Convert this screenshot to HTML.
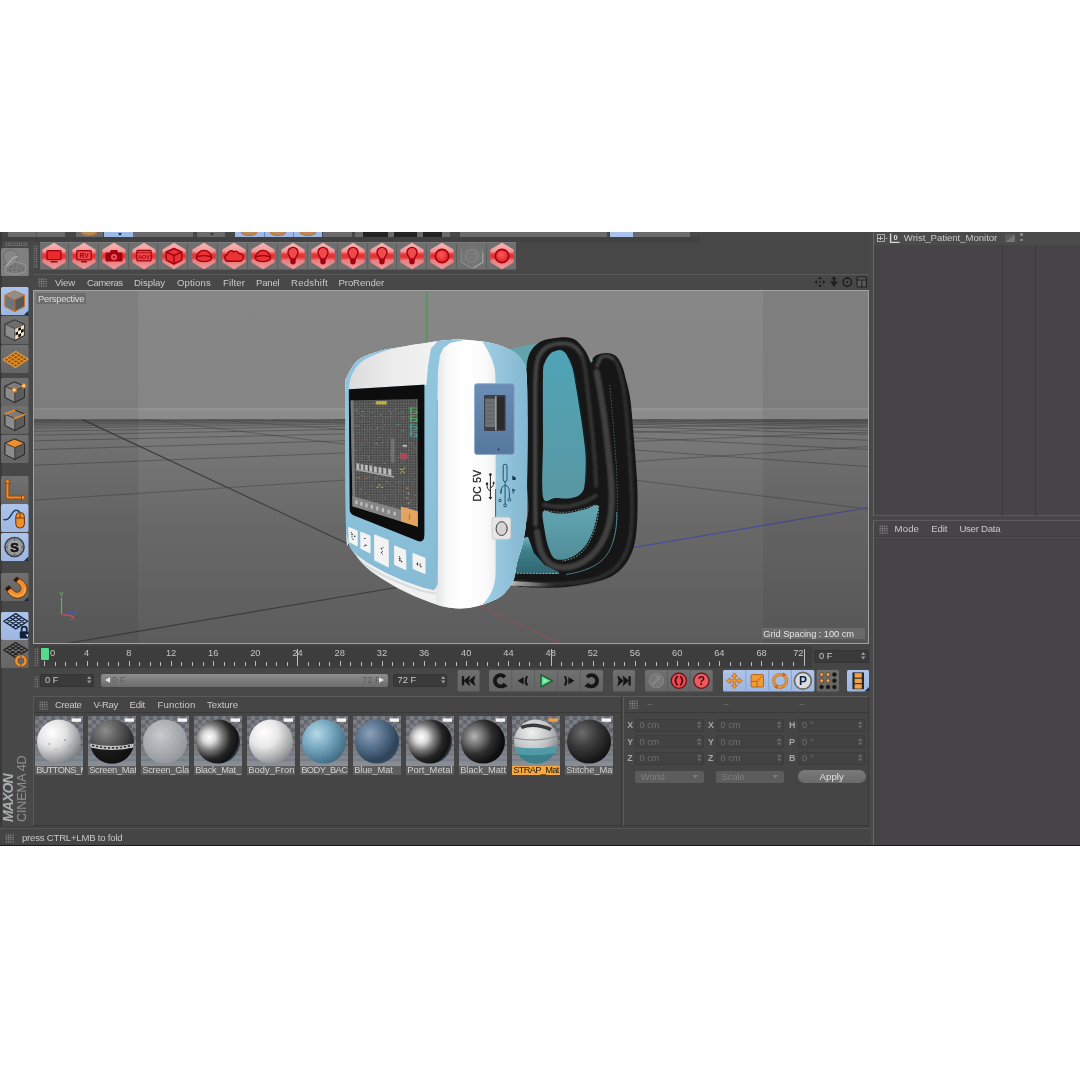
<!DOCTYPE html>
<html lang="en"><head><meta charset="utf-8"><title>Cinema 4D - Wrist_Patient_Monitor</title>
<style>
html,body{margin:0;padding:0;background:#fff;}
body{width:1080px;height:1080px;overflow:hidden;position:relative;font-family:"Liberation Sans",sans-serif;}
#app{position:absolute;left:0;top:232px;width:1080px;height:614px;background:#474747;overflow:hidden;}
#app div,#app span,#app svg{position:absolute;box-sizing:border-box;}
.t{white-space:nowrap;}
.ticks i{position:absolute;width:1px;background:#bdbdbd;display:block;}
#ui{left:0;top:-232px;width:1080px;height:1080px;will-change:transform;}

</style></head>
<body>
<div id="app">
<div id="ui">
<svg width="0" height="0" style="left:0;top:0"><defs>
<linearGradient id="hx" x1="0" y1="0" x2="0" y2="1"><stop offset="0" stop-color="#f8b6b6"/><stop offset=".3" stop-color="#f29a9a"/><stop offset=".5" stop-color="#ee7878"/><stop offset=".75" stop-color="#ea8484"/><stop offset="1" stop-color="#ef9c9c"/></linearGradient>
<linearGradient id="hb" x1="0" y1="0" x2="0" y2="1"><stop offset="0" stop-color="#e83838" stop-opacity="0"/><stop offset=".35" stop-color="#e62e2e" stop-opacity=".95"/><stop offset=".65" stop-color="#e62e2e" stop-opacity=".95"/><stop offset="1" stop-color="#e83838" stop-opacity="0"/></linearGradient>
<radialGradient id="rb" cx=".45" cy=".4" r=".6"><stop offset="0" stop-color="#ff5a5a"/><stop offset="1" stop-color="#e01e26"/></radialGradient>
<linearGradient id="btn" x1="0" y1="0" x2="0" y2="1"><stop offset="0" stop-color="#707070"/><stop offset="1" stop-color="#656565"/></linearGradient>
<linearGradient id="btnb" x1="0" y1="0" x2="0" y2="1"><stop offset="0" stop-color="#adc4ea"/><stop offset="1" stop-color="#9db7e2"/></linearGradient>
</defs></svg>
<!-- top cut-off palette row -->
<div style="left:7.5px;top:232.0px;width:57.5px;height:5.0px;background:#6b6b6b;"></div>
<div style="left:36.0px;top:232.0px;width:1.0px;height:5.0px;background:#555;"></div>
<div style="left:76.0px;top:232.0px;width:27.0px;height:5.0px;background:#6b6b6b;"></div>
<div style="left:103.5px;top:232.0px;width:29.5px;height:5.0px;background:#9db9e6;"></div>
<div style="left:133.0px;top:232.0px;width:59.5px;height:5.0px;background:#6b6b6b;"></div>
<div style="left:197.0px;top:232.0px;width:28.0px;height:5.0px;background:#6b6b6b;"></div>
<div style="left:234.7px;top:232.0px;width:87.8px;height:5.0px;background:#9db9e6;"></div>
<div style="left:264.0px;top:232.0px;width:1.0px;height:5.0px;background:#6f87ad;"></div>
<div style="left:293.0px;top:232.0px;width:1.0px;height:5.0px;background:#6f87ad;"></div>
<div style="left:81.0px;top:229.0px;width:16.0px;height:7.0px;border-radius:50%;border:1.5px solid #c46a2a;background:#b98a5a;"></div>
<div style="left:241.0px;top:229.0px;width:16.0px;height:7.0px;border-radius:50%;border:1.5px solid #c46a2a;background:#b98a5a;"></div>
<div style="left:270.0px;top:229.0px;width:16.0px;height:7.0px;border-radius:50%;border:1.5px solid #c46a2a;background:#b98a5a;"></div>
<div style="left:300.0px;top:229.0px;width:16.0px;height:7.0px;border-radius:50%;border:1.5px solid #c46a2a;background:#b98a5a;"></div>
<div style="left:322.5px;top:232.0px;width:29.2px;height:5.0px;background:#6b6b6b;"></div>
<div style="left:355.0px;top:232.0px;width:95.0px;height:5.0px;background:#6b6b6b;"></div>
<div style="left:362.5px;top:232.0px;width:25.5px;height:5.0px;background:#242424;"></div>
<div style="left:394.0px;top:232.0px;width:22.7px;height:5.0px;background:#242424;"></div>
<div style="left:423.0px;top:232.0px;width:18.7px;height:5.0px;background:#242424;"></div>
<div style="left:502.5px;top:232.0px;width:4.0px;height:3.0px;background:#e09a30;border-radius:50%;"></div>
<div style="left:460.0px;top:232.0px;width:146.7px;height:5.0px;background:#6b6b6b;"></div>
<div style="left:610.0px;top:232.0px;width:23.0px;height:5.0px;background:#a9c3ea;"></div>
<div style="left:633.0px;top:232.0px;width:57.0px;height:5.0px;background:#6b6b6b;"></div>
<div style="left:118.0px;top:233.0px;width:4.0px;height:3.0px;background:#2a3a5a;clip-path:polygon(0 0,100% 0,50% 100%);"></div>
<div style="left:210.0px;top:233.0px;width:4.0px;height:3.0px;background:#2a3a5a;clip-path:polygon(0 0,100% 0,50% 100%);"></div>
<div style="left:0.0px;top:237.0px;width:700.0px;height:4.5px;background:#414141;"></div>
<div style="left:0.0px;top:241.0px;width:32.5px;height:605.0px;background:#484848;"></div>
<div style="left:0.0px;top:232.0px;width:1.5px;height:614.0px;background:#3a3a3a;"></div>
<div style="left:5px;top:241.6px;width:22.5px;height:4.5px;background-image:radial-gradient(circle,#828282 0.6px,transparent 0.9px);background-size:2.25px 2.25px;"></div>
<div style="left:33px;top:245px;width:4.5px;height:22.5px;background-image:radial-gradient(circle,#7a7a7a 0.6px,transparent 0.9px);background-size:2.25px 2.25px;"></div>
<!-- redshift toolbar -->
<div style="left:40.0px;top:241.5px;width:476.0px;height:28.0px;background:#6f6f6f;border-top:1px solid #7b7b7b;border-bottom:1px solid #5c5c5c;"></div>
<div style="left:67.5px;top:242.5px;width:1.0px;height:26.0px;background:#5e5e5e;"></div>
<div style="left:97.5px;top:242.5px;width:1.0px;height:26.0px;background:#5e5e5e;"></div>
<div style="left:127.5px;top:242.5px;width:1.0px;height:26.0px;background:#5e5e5e;"></div>
<div style="left:157.0px;top:242.5px;width:1.0px;height:26.0px;background:#5e5e5e;"></div>
<div style="left:187.0px;top:242.5px;width:1.0px;height:26.0px;background:#5e5e5e;"></div>
<div style="left:217.0px;top:242.5px;width:1.0px;height:26.0px;background:#5e5e5e;"></div>
<div style="left:247.0px;top:242.5px;width:1.0px;height:26.0px;background:#5e5e5e;"></div>
<div style="left:276.5px;top:242.5px;width:1.0px;height:26.0px;background:#5e5e5e;"></div>
<div style="left:306.5px;top:242.5px;width:1.0px;height:26.0px;background:#5e5e5e;"></div>
<div style="left:336.5px;top:242.5px;width:1.0px;height:26.0px;background:#5e5e5e;"></div>
<div style="left:366.5px;top:242.5px;width:1.0px;height:26.0px;background:#5e5e5e;"></div>
<div style="left:396.0px;top:242.5px;width:1.0px;height:26.0px;background:#5e5e5e;"></div>
<div style="left:425.8px;top:242.5px;width:1.0px;height:26.0px;background:#5e5e5e;"></div>
<div style="left:455.8px;top:242.5px;width:1.0px;height:26.0px;background:#5e5e5e;"></div>
<div style="left:486.0px;top:242.5px;width:1.0px;height:26.0px;background:#5e5e5e;"></div>
<svg style="left:41.0px;top:241.5px;" width="26" height="28" viewBox="-13 -14 26 28" ><polygon points="0,-13.2 11.6,-6.6 11.6,6.6 0,13.2 -11.6,6.6 -11.6,-6.6" fill="url(#hx)"/><polygon points="-11.8,-4.6 11.8,-4.6 11.8,4.6 -11.8,4.6" fill="url(#hb)"/><rect x="-7" y="-5.3" width="14" height="9" rx="1" fill="#ea2a2e" stroke="#a30012" stroke-width="1.3"/><path d="M-3,5.8 L3,5.8" fill="none" stroke="#a30012" stroke-width="1.4" stroke-linejoin="round" stroke-linecap="round"/></svg>
<svg style="left:71.0px;top:241.5px;" width="26" height="28" viewBox="-13 -14 26 28" ><polygon points="0,-13.2 11.6,-6.6 11.6,6.6 0,13.2 -11.6,6.6 -11.6,-6.6" fill="url(#hx)"/><polygon points="-11.8,-4.6 11.8,-4.6 11.8,4.6 -11.8,4.6" fill="url(#hb)"/><rect x="-7.2" y="-5.3" width="14.4" height="9.2" rx="1" fill="#ee4848" stroke="#a30012" stroke-width="1.3"/><path d="M-2.5,5.8 L2.5,5.8" fill="none" stroke="#a30012" stroke-width="1.4" stroke-linejoin="round" stroke-linecap="round"/><text x="0" y="2.2" font-size="6.6" font-weight="bold" text-anchor="middle" fill="#a30012" font-family="Liberation Sans,sans-serif">RV</text></svg>
<svg style="left:101.0px;top:241.5px;" width="26" height="28" viewBox="-13 -14 26 28" ><polygon points="0,-13.2 11.6,-6.6 11.6,6.6 0,13.2 -11.6,6.6 -11.6,-6.6" fill="url(#hx)"/><polygon points="-11.8,-4.6 11.8,-4.6 11.8,4.6 -11.8,4.6" fill="url(#hb)"/><path d="M-7.5,-3.6 h3.2 l1.3,-2.4 h6 l1.3,2.4 h3.2 a1,1 0 0 1 1,1 v7.2 a1,1 0 0 1 -1,1 h-15 a1,1 0 0 1 -1,-1 v-7.2 a1,1 0 0 1 1,-1z" fill="#a30012"/><circle cx="0" cy="1" r="3" fill="#ee5a5a"/><circle cx="0" cy="1" r="1.3" fill="#b3101c"/></svg>
<svg style="left:130.8px;top:241.5px;" width="26" height="28" viewBox="-13 -14 26 28" ><polygon points="0,-13.2 11.6,-6.6 11.6,6.6 0,13.2 -11.6,6.6 -11.6,-6.6" fill="url(#hx)"/><polygon points="-11.8,-4.6 11.8,-4.6 11.8,4.6 -11.8,4.6" fill="url(#hb)"/><rect x="-7.2" y="-5.6" width="14.4" height="10.4" rx="1" fill="#ee4848" stroke="#a30012" stroke-width="1.2"/><path d="M-6.5,-3.4 L6.5,-3.4" stroke="#a30012" stroke-width="1.3" stroke-dasharray="1.2 .7"/><text x="0" y="3.1" font-size="5.4" font-weight="bold" text-anchor="middle" fill="#a30012" font-family="Liberation Sans,sans-serif">AOV</text></svg>
<svg style="left:160.5px;top:241.5px;" width="26" height="28" viewBox="-13 -14 26 28" ><polygon points="0,-13.2 11.6,-6.6 11.6,6.6 0,13.2 -11.6,6.6 -11.6,-6.6" fill="url(#hx)"/><polygon points="-11.8,-4.6 11.8,-4.6 11.8,4.6 -11.8,4.6" fill="url(#hb)"/><path d="M0,-7.5 L7.8,-4 L7.8,4.2 L0,8 L-7.8,4.2 L-7.8,-4 Z" fill="#ea3030"  stroke="#a30012" stroke-width="1.4" stroke-linejoin="round" stroke-linecap="round"/><path d="M-7.8,-4 L0,-0.5 L7.8,-4 M0,-0.5 L0,8" fill="none" stroke="#a30012" stroke-width="1.4" stroke-linejoin="round" stroke-linecap="round"/></svg>
<svg style="left:190.5px;top:241.5px;" width="26" height="28" viewBox="-13 -14 26 28" ><polygon points="0,-13.2 11.6,-6.6 11.6,6.6 0,13.2 -11.6,6.6 -11.6,-6.6" fill="url(#hx)"/><polygon points="-11.8,-4.6 11.8,-4.6 11.8,4.6 -11.8,4.6" fill="url(#hb)"/><path d="M-7.6,2.2 A7.6,7.8 0 0 1 7.6,2.2 A7.6,3.4 0 0 1 -7.6,2.2 Z" fill="#ea3434" stroke="#a30012" stroke-width="1.4"/><path d="M-7.6,2.2 A7.6,2.6 0 0 1 7.6,2.2" fill="none" stroke="#a30012" stroke-width="1.4" stroke-linejoin="round" stroke-linecap="round"/></svg>
<svg style="left:220.5px;top:241.5px;" width="26" height="28" viewBox="-13 -14 26 28" ><polygon points="0,-13.2 11.6,-6.6 11.6,6.6 0,13.2 -11.6,6.6 -11.6,-6.6" fill="url(#hx)"/><polygon points="-11.8,-4.6 11.8,-4.6 11.8,4.6 -11.8,4.6" fill="url(#hb)"/><path d="M-6,5.2 a3.4,3.4 0 0 1 -.6,-6.7 a3.8,3.8 0 0 1 6.4,-2.6 a3.1,3.1 0 0 1 5,1.6 a3.6,3.6 0 0 1 1.2,7.7 z" fill="#ea3434" stroke="#a30012" stroke-width="1.4" stroke-linejoin="round"/></svg>
<svg style="left:250.0px;top:241.5px;" width="26" height="28" viewBox="-13 -14 26 28" ><polygon points="0,-13.2 11.6,-6.6 11.6,6.6 0,13.2 -11.6,6.6 -11.6,-6.6" fill="url(#hx)"/><polygon points="-11.8,-4.6 11.8,-4.6 11.8,4.6 -11.8,4.6" fill="url(#hb)"/><path d="M-7.6,2.2 A7.6,7.8 0 0 1 7.6,2.2 A7.6,3.4 0 0 1 -7.6,2.2 Z" fill="#ea3434" stroke="#a30012" stroke-width="1.4"/><path d="M-7.6,2.2 A7.6,2.6 0 0 1 7.6,2.2" fill="none" stroke="#a30012" stroke-width="1.4" stroke-linejoin="round" stroke-linecap="round"/></svg>
<svg style="left:280.0px;top:241.5px;" width="26" height="28" viewBox="-13 -14 26 28" ><polygon points="0,-13.2 11.6,-6.6 11.6,6.6 0,13.2 -11.6,6.6 -11.6,-6.6" fill="url(#hx)"/><polygon points="-11.8,-4.6 11.8,-4.6 11.8,4.6 -11.8,4.6" fill="url(#hb)"/><path d="M-2.4,3 C-2.4,0.6 -5,-0.6 -5,-3.6 A5,5 0 0 1 5,-3.6 C5,-0.6 2.4,0.6 2.4,3 Z" fill="#ee4a4a" stroke="#a30012" stroke-width="1.4" stroke-linejoin="round"/><path d="M-2.7,3.2 h5.4 v2.6 a2.7,2.7 0 0 1 -5.4,0 z" fill="#a30012"/></svg>
<svg style="left:309.5px;top:241.5px;" width="26" height="28" viewBox="-13 -14 26 28" ><polygon points="0,-13.2 11.6,-6.6 11.6,6.6 0,13.2 -11.6,6.6 -11.6,-6.6" fill="url(#hx)"/><polygon points="-11.8,-4.6 11.8,-4.6 11.8,4.6 -11.8,4.6" fill="url(#hb)"/><path d="M-2.4,3 C-2.4,0.6 -5,-0.6 -5,-3.6 A5,5 0 0 1 5,-3.6 C5,-0.6 2.4,0.6 2.4,3 Z" fill="#ee4a4a" stroke="#a30012" stroke-width="1.4" stroke-linejoin="round"/><path d="M-2.7,3.2 h5.4 v2.6 a2.7,2.7 0 0 1 -5.4,0 z" fill="#a30012"/></svg>
<svg style="left:339.5px;top:241.5px;" width="26" height="28" viewBox="-13 -14 26 28" ><polygon points="0,-13.2 11.6,-6.6 11.6,6.6 0,13.2 -11.6,6.6 -11.6,-6.6" fill="url(#hx)"/><polygon points="-11.8,-4.6 11.8,-4.6 11.8,4.6 -11.8,4.6" fill="url(#hb)"/><path d="M-2.4,3 C-2.4,0.6 -5,-0.6 -5,-3.6 A5,5 0 0 1 5,-3.6 C5,-0.6 2.4,0.6 2.4,3 Z" fill="#ee4a4a" stroke="#a30012" stroke-width="1.4" stroke-linejoin="round"/><path d="M-2.7,3.2 h5.4 v2.6 a2.7,2.7 0 0 1 -5.4,0 z" fill="#a30012"/></svg>
<svg style="left:369.3px;top:241.5px;" width="26" height="28" viewBox="-13 -14 26 28" ><polygon points="0,-13.2 11.6,-6.6 11.6,6.6 0,13.2 -11.6,6.6 -11.6,-6.6" fill="url(#hx)"/><polygon points="-11.8,-4.6 11.8,-4.6 11.8,4.6 -11.8,4.6" fill="url(#hb)"/><path d="M-2.4,3 C-2.4,0.6 -5,-0.6 -5,-3.6 A5,5 0 0 1 5,-3.6 C5,-0.6 2.4,0.6 2.4,3 Z" fill="#ee4a4a" stroke="#a30012" stroke-width="1.4" stroke-linejoin="round"/><path d="M-2.7,3.2 h5.4 v2.6 a2.7,2.7 0 0 1 -5.4,0 z" fill="#a30012"/></svg>
<svg style="left:399.2px;top:241.5px;" width="26" height="28" viewBox="-13 -14 26 28" ><polygon points="0,-13.2 11.6,-6.6 11.6,6.6 0,13.2 -11.6,6.6 -11.6,-6.6" fill="url(#hx)"/><polygon points="-11.8,-4.6 11.8,-4.6 11.8,4.6 -11.8,4.6" fill="url(#hb)"/><path d="M-2.4,3 C-2.4,0.6 -5,-0.6 -5,-3.6 A5,5 0 0 1 5,-3.6 C5,-0.6 2.4,0.6 2.4,3 Z" fill="#ee4a4a" stroke="#a30012" stroke-width="1.4" stroke-linejoin="round"/><path d="M-2.7,3.2 h5.4 v2.6 a2.7,2.7 0 0 1 -5.4,0 z" fill="#a30012"/></svg>
<svg style="left:429.0px;top:241.5px;" width="26" height="28" viewBox="-13 -14 26 28" ><polygon points="0,-13.2 11.6,-6.6 11.6,6.6 0,13.2 -11.6,6.6 -11.6,-6.6" fill="url(#hx)"/><polygon points="-11.8,-4.6 11.8,-4.6 11.8,4.6 -11.8,4.6" fill="url(#hb)"/><circle r="6.7" fill="url(#rb)" stroke="#a30012" stroke-width="1.7"/></svg>
<svg style="left:459.0px;top:241.5px;" width="26" height="28" viewBox="-13 -14 26 28" ><polygon points="0,-13.2 11.6,-6.6 11.6,6.6 0,13.2 -11.6,6.6 -11.6,-6.6" fill="#747474" stroke="#8a8a8a" stroke-width="1.3" transform="scale(.93)"/><circle r="6.2" fill="none" stroke="#838383" stroke-width="1.6"/><circle r="2.8" cx=".6" cy=".3" fill="none" stroke="#7f7f7f" stroke-width="1.3"/><path d="M-10.5,-6 L0,-12.2 L10.5,-6" fill="none" stroke="#666" stroke-width="1"/><path d="M2,12 L10.8,6.5 L10.8,-2" fill="none" stroke="#a2a2a2" stroke-width="1.1"/></svg>
<svg style="left:488.5px;top:241.5px;" width="26" height="28" viewBox="-13 -14 26 28" ><polygon points="0,-13.2 11.6,-6.6 11.6,6.6 0,13.2 -11.6,6.6 -11.6,-6.6" fill="url(#hx)"/><polygon points="-11.8,-4.6 11.8,-4.6 11.8,4.6 -11.8,4.6" fill="url(#hb)"/><circle r="6.7" fill="url(#rb)" stroke="#a30012" stroke-width="1.7"/></svg>
<!-- left mode palette -->
<svg style="left:1.1px;top:247.9px;" width="27.8" height="28" viewBox="0 0 27.8 28" ><rect x="0" y="0" width="27.8" height="28" rx="1.5" fill="#808080"/><circle cx="9.5" cy="9" r="7.2" fill="#868686" stroke="#6c6c6c" stroke-width="1"/><path d="M3.5,18 C8,17 9.5,12.5 11.5,10.5 C13,9 15,8.6 17,8.8" fill="none" stroke="#a6a6a6" stroke-width="1.6"/><path d="M5,19.5 L14,13.5 L25,17 L24,24 L14,26.5 L4.5,24.5 Z" fill="#7a7a7a" stroke="#9a9a9a" stroke-width=".9"/><g fill="#666"><circle cx="10" cy="19" r="1.1"/><circle cx="14.5" cy="17.5" r="1.1"/><circle cx="19" cy="18.5" r="1.1"/><circle cx="9" cy="22.5" r="1.1"/><circle cx="13.5" cy="22" r="1.1"/><circle cx="18" cy="22.5" r="1.1"/><circle cx="22" cy="21" r="1.1"/><circle cx="3.6" cy="16.5" r="1.3"/></g></svg>
<svg style="left:1.2px;top:286.5px;" width="27.5" height="28" viewBox="0 0 27.5 28" ><rect x="0" y="0" width="27.5" height="28" rx="1.5" fill="url(#btnb)"/><path d="M13.5,4 L23.5,8.2 L23.5,19.5 L13.8,24.5 L4,19.5 L4,8.2 Z" fill="#575757" stroke="#c9762c" stroke-width="1.0" stroke-linejoin="round"/><path d="M4,8.2 L13.8,12.6 L13.8,24.5 L4,19.5 Z" fill="#6d767c"/><path d="M4,8.2 L13.5,4 L23.5,8.2 L13.8,12.6 Z" fill="#8f8f8f"/><path d="M4,8.2 L13.8,12.6 L23.5,8.2 M13.8,12.6 L13.8,24.5" fill="none" stroke="#c9762c" stroke-width="0.8"/><path d="M13.5,4 L23.5,8.2 L23.5,19.5 L13.8,24.5 L4,19.5 L4,8.2 Z" fill="none" stroke="#c9762c" stroke-width="1.0" stroke-linejoin="round"/><path d="M27.5,23.5 V28 H23 Z" fill="#1e2a3a"/></svg>
<svg style="left:1.2px;top:315.7px;" width="27.5" height="28" viewBox="0 0 27.5 28" ><rect x="0" y="0" width="27.5" height="28" rx="1.5" fill="url(#btn)"/><path d="M13.5,4 L23.5,8.2 L23.5,19.5 L13.8,24.5 L4,19.5 L4,8.2 Z" fill="#f6dcb8" stroke="#3a3a3a" stroke-width="1.0" stroke-linejoin="round"/><path d="M4,8.2 L13.8,12.6 L13.8,24.5 L4,19.5 Z" fill="#8c8c8c"/><path d="M4,8.2 L13.5,4 L23.5,8.2 L13.8,12.6 Z" fill="#6e6e6e"/><path d="M4,8.2 L13.8,12.6 L23.5,8.2 M13.8,12.6 L13.8,24.5" fill="none" stroke="#3a3a3a" stroke-width="0.8"/><path d="M13.5,4 L23.5,8.2 L23.5,19.5 L13.8,24.5 L4,19.5 L4,8.2 Z" fill="none" stroke="#3a3a3a" stroke-width="1.0" stroke-linejoin="round"/><path d="M14.6,13.4L17.3,12.2L17.3,15.3L14.6,16.6Z" fill="#f6dcb8"/><path d="M17.3,12.2L20.0,10.9L20.0,14.0L17.3,15.3Z" fill="#0c0c0c"/><path d="M20.0,10.9L22.7,9.7L22.7,12.8L20.0,14.0Z" fill="#f6dcb8"/><path d="M14.6,16.6L17.3,15.3L17.3,18.5L14.6,19.8Z" fill="#0c0c0c"/><path d="M17.3,15.3L20.0,14.0L20.0,17.2L17.3,18.5Z" fill="#ffffff"/><path d="M20.0,14.0L22.7,12.8L22.7,15.8L20.0,17.2Z" fill="#0c0c0c"/><path d="M14.6,19.8L17.3,18.5L17.3,21.6L14.6,23.0Z" fill="#f6dcb8"/><path d="M17.3,18.5L20.0,17.2L20.0,20.3L17.3,21.6Z" fill="#0c0c0c"/><path d="M20.0,17.2L22.7,15.8L22.7,18.9L20.0,20.3Z" fill="#f6dcb8"/></svg>
<svg style="left:1.2px;top:345.0px;" width="27.5" height="28" viewBox="0 0 27.5 28" ><rect x="0" y="0" width="27.5" height="28" rx="1.5" fill="url(#btn)"/><path d="M2.3,14.7 L14.9,6.4 L27,13.9 L14.5,22.6 Z" fill="#8a5414" stroke="#e8a040" stroke-width="1.2" stroke-linejoin="round"/><path d="M5.5,12.6 L17.6,20.4 M5.3,16.7 L17.9,8.3 M8.6,10.6 L20.8,18.2 M8.4,18.6 L20.9,10.2 M11.8,8.5 L23.9,16.1 M11.4,20.6 L24.0,12.0 " stroke="#e08a28" stroke-width="1.3" fill="none"/></svg>
<svg style="left:1.2px;top:378.0px;" width="27.5" height="28" viewBox="0 0 27.5 28" ><rect x="0" y="0" width="27.5" height="28" rx="1.5" fill="url(#btn)"/><path d="M13.5,4 L23.5,8.2 L23.5,19.5 L13.8,24.5 L4,19.5 L4,8.2 Z" fill="#5c5c5c" stroke="#2e2e2e" stroke-width="1.0" stroke-linejoin="round"/><path d="M4,8.2 L13.8,12.6 L13.8,24.5 L4,19.5 Z" fill="#8c8c8c"/><path d="M4,8.2 L13.5,4 L23.5,8.2 L13.8,12.6 Z" fill="#7c7c7c"/><path d="M4,8.2 L13.8,12.6 L23.5,8.2 M13.8,12.6 L13.8,24.5" fill="none" stroke="#2e2e2e" stroke-width="0.8"/><path d="M13.5,4 L23.5,8.2 L23.5,19.5 L13.8,24.5 L4,19.5 L4,8.2 Z" fill="none" stroke="#2e2e2e" stroke-width="1.0" stroke-linejoin="round"/><circle cx="22.8" cy="7.8" r="2" fill="#f8dcb8" stroke="#e07a1c" stroke-width="1.2"/><circle cx="13.3" cy="12" r="2" fill="#f8dcb8" stroke="#e07a1c" stroke-width="1.2"/></svg>
<svg style="left:1.2px;top:406.2px;" width="27.5" height="28" viewBox="0 0 27.5 28" ><rect x="0" y="0" width="27.5" height="28" rx="1.5" fill="url(#btn)"/><path d="M13.5,4 L23.5,8.2 L23.5,19.5 L13.8,24.5 L4,19.5 L4,8.2 Z" fill="#5c5c5c" stroke="#2e2e2e" stroke-width="1.0" stroke-linejoin="round"/><path d="M4,8.2 L13.8,12.6 L13.8,24.5 L4,19.5 Z" fill="#8c8c8c"/><path d="M4,8.2 L13.5,4 L23.5,8.2 L13.8,12.6 Z" fill="#7c7c7c"/><path d="M4,8.2 L13.8,12.6 L23.5,8.2 M13.8,12.6 L13.8,24.5" fill="none" stroke="#2e2e2e" stroke-width="0.8"/><path d="M13.5,4 L23.5,8.2 L23.5,19.5 L13.8,24.5 L4,19.5 L4,8.2 Z" fill="none" stroke="#2e2e2e" stroke-width="1.0" stroke-linejoin="round"/><path d="M4.2,8 L13.6,4.2 M13.8,12.6 L23.4,8.4" stroke="#f0902c" stroke-width="1.6" stroke-linecap="round"/></svg>
<svg style="left:1.2px;top:435.4px;" width="27.5" height="28" viewBox="0 0 27.5 28" ><rect x="0" y="0" width="27.5" height="28" rx="1.5" fill="url(#btn)"/><path d="M13.5,4 L23.5,8.2 L23.5,19.5 L13.8,24.5 L4,19.5 L4,8.2 Z" fill="#5c5c5c" stroke="#2e2e2e" stroke-width="1.0" stroke-linejoin="round"/><path d="M4,8.2 L13.8,12.6 L13.8,24.5 L4,19.5 Z" fill="#8c8c8c"/><path d="M4,8.2 L13.5,4 L23.5,8.2 L13.8,12.6 Z" fill="#f0902c"/><path d="M4,8.2 L13.8,12.6 L23.5,8.2 M13.8,12.6 L13.8,24.5" fill="none" stroke="#2e2e2e" stroke-width="0.8"/><path d="M13.5,4 L23.5,8.2 L23.5,19.5 L13.8,24.5 L4,19.5 L4,8.2 Z" fill="none" stroke="#2e2e2e" stroke-width="1.0" stroke-linejoin="round"/></svg>
<svg style="left:1.2px;top:476.0px;" width="27.5" height="28" viewBox="0 0 27.5 28" ><rect x="0" y="0" width="27.5" height="28" rx="1.5" fill="url(#btn)"/><path d="M6.5,5 V21.5 H22" fill="none" stroke="#7a3c08" stroke-width="3.6" stroke-linejoin="round"/><path d="M6.5,5 V21.5 H22" fill="none" stroke="#f0902c" stroke-width="2" stroke-linejoin="round"/><path d="M3.3,7 L6.5,2.5 L9.7,7 Z M20.5,18.2 L25,21.5 L20.5,24.8 Z" fill="#f0902c" stroke="#7a3c08" stroke-width=".8" stroke-linejoin="round"/></svg>
<svg style="left:1.2px;top:504.1px;" width="27.5" height="28" viewBox="0 0 27.5 28" ><rect x="0" y="0" width="27.5" height="28" rx="1.5" fill="url(#btnb)"/><path d="M3,15.5 C7,17 9,13 11,9.5 C13,6 16,5 18.5,8" fill="none" stroke="#1d3d6a" stroke-width="1.5" stroke-linecap="round"/><rect x="14.8" y="8.5" width="8.6" height="15.5" rx="4" fill="#f0902c" stroke="#6a3408" stroke-width="1"/><path d="M14.8,14 h8.6 M19.1,8.5 v5.5" stroke="#6a3408" stroke-width=".9"/></svg>
<svg style="left:1.2px;top:533.3px;" width="27.5" height="28" viewBox="0 0 27.5 28" ><rect x="0" y="0" width="27.5" height="28" rx="1.5" fill="url(#btnb)"/><circle cx="13.5" cy="14" r="9.6" fill="#8e9294" stroke="#3a3d40" stroke-width="1.4"/><circle cx="13.5" cy="14" r="6.6" fill="#a2a6a8"/><path d="M13.5,4.4 v3 M13.5,20.6 v3 M3.9,14 h3 M20.1,14 h3" stroke="#555" stroke-width="1"/><text x="13.5" y="18.6" font-size="13" font-weight="bold" text-anchor="middle" fill="#161616" stroke="#161616" stroke-width=".7" font-family="Liberation Sans,sans-serif">S</text><path d="M27.5,23.5 V28 H23 Z" fill="#1e2a3a"/></svg>
<svg style="left:1.2px;top:573.0px;" width="27.5" height="28" viewBox="0 0 27.5 28" ><rect x="0" y="0" width="27.5" height="28" rx="1.5" fill="url(#btn)"/><path d="M4.2,15.3 C6,19 8,21.5 10.2,23.1 C13,25 16,25.6 18.5,25 C21.5,24.2 24,22.6 25,20.3 C26.2,18 26.4,16 25.9,13.9 C25.2,11.2 23.6,9 21.3,7.4 C19.4,6 17.4,5 15.3,4.1 L12.5,7.4 C14.4,8.4 16.2,9.6 17.6,11.1 C19.2,12.6 20,14 19.9,15.7 C19.8,17.4 19,18.6 17.6,19 C16.4,19.4 15.2,19.2 13.9,18.5 C11.8,17.2 10,15.2 8.3,12.5 Z" fill="#f0902c" stroke="#6a3408" stroke-width="1" stroke-linejoin="round"/><path d="M4.2,15.3 L8.3,12.5 L10.2,15.2 L6,18.2 Z M15.3,4.1 L12.5,7.4 L15.4,9 L18.4,5.7 Z" fill="#2a1a10"/><path d="M9,19.5 C12,23 16.5,24 20,22.5 C23,21 24.6,18 24,14.6" fill="none" stroke="#f8c080" stroke-width="1" stroke-opacity=".8"/><path d="M27.5,23.5 V28 H23 Z" fill="#1e2a3a"/></svg>
<svg style="left:1.2px;top:611.5px;" width="27.5" height="28" viewBox="0 0 27.5 28" ><rect x="0" y="0" width="27.5" height="28" rx="1.5" fill="url(#btnb)"/><path d="M2.8,9.3 L14.8,1.6 L26.7,9.3 L14.8,17 Z" fill="none" stroke="#17253e" stroke-width="1.3" stroke-linejoin="round"/><path d="M5.8,7.4 L17.8,15.1 M5.8,11.2 L17.8,3.5 M8.8,5.5 L20.8,13.2 M8.8,13.2 L20.8,5.5 M11.8,3.5 L23.7,11.2 M11.8,15.1 L23.7,7.4 " stroke="#17253e" stroke-width="1.2" fill="none"/><rect x="18.8" y="19.2" width="8.8" height="7.4" rx="1" fill="#12203a"/><path d="M20.6,19.4 v-2.2 a2.6,2.6 0 0 1 5.2,0 v2.2" fill="none" stroke="#12203a" stroke-width="1.7"/><path d="M24.4,22.6 l2.6,0 l0,2.6z" fill="#e8eef8"/></svg>
<svg style="left:1.2px;top:640.2px;" width="27.5" height="28" viewBox="0 0 27.5 28" ><rect x="0" y="0" width="27.5" height="28" rx="1.5" fill="url(#btn)"/><path d="M2.8,10 L14.8,2.6 L26.7,10 L14.8,17.6 Z" fill="none" stroke="#242424" stroke-width="1.3" stroke-linejoin="round"/><path d="M5.8,8.2 L17.8,15.7 M5.8,11.9 L17.8,4.5 M8.8,6.3 L20.8,13.8 M8.8,13.8 L20.8,6.3 M11.8,4.4 L23.7,11.9 M11.8,15.7 L23.7,8.2 " stroke="#242424" stroke-width="1.2" fill="none"/><circle cx="19.9" cy="20.8" r="4.6" fill="none" stroke="#8a4a10" stroke-width="4"/><circle cx="19.9" cy="20.8" r="4.6" fill="none" stroke="#f0902c" stroke-width="2.6"/><path d="M19.9,14.6 v3 M19.9,24 v3" stroke="#6a6a6a" stroke-width="1.6"/></svg>
<!-- viewport menu -->
<div style="left:33.0px;top:273.5px;width:836.0px;height:16.5px;background:#484848;border-top:1px solid #5a5a5a;"></div>
<div style="left:38px;top:278px;width:9.2px;height:9.2px;background-image:radial-gradient(circle,#8c8c8c 0.6px,transparent 0.9px);background-size:2.3px 2.3px;"></div>
<span class="t " style="left:55.0px;top:275.8px;height:14px;line-height:14px;font-size:9.6px;color:#c9c9c9;letter-spacing:-0.159px;">View</span>
<span class="t " style="left:87.0px;top:275.8px;height:14px;line-height:14px;font-size:9.6px;color:#c9c9c9;letter-spacing:-0.477px;">Cameras</span>
<span class="t " style="left:134.0px;top:275.8px;height:14px;line-height:14px;font-size:9.6px;color:#c9c9c9;letter-spacing:-0.068px;">Display</span>
<span class="t " style="left:177.0px;top:275.8px;height:14px;line-height:14px;font-size:9.6px;color:#c9c9c9;letter-spacing:0.131px;">Options</span>
<span class="t " style="left:223.0px;top:275.8px;height:14px;line-height:14px;font-size:9.6px;color:#c9c9c9;letter-spacing:0.111px;">Filter</span>
<span class="t " style="left:256.0px;top:275.8px;height:14px;line-height:14px;font-size:9.6px;color:#c9c9c9;letter-spacing:-0.210px;">Panel</span>
<span class="t " style="left:291.0px;top:275.8px;height:14px;line-height:14px;font-size:9.6px;color:#c9c9c9;letter-spacing:0.223px;">Redshift</span>
<span class="t " style="left:338.5px;top:275.8px;height:14px;line-height:14px;font-size:9.6px;color:#c9c9c9;letter-spacing:-0.102px;">ProRender</span>
<svg style="left:813.0px;top:276.0px;" width="56" height="12" viewBox="0 0 56 12" ><path d="M7,0.5 l2,2.6 h-4z M7,11.5 l2,-2.6 h-4z M1.5,6 l2.6,-2 v4z M12.5,6 l-2.6,-2 v4z" fill="#1f1f1f"/><circle cx="7" cy="6" r="0.9" fill="#1f1f1f"/><path d="M21,0.5 v7" stroke="#1f1f1f" stroke-width="1.8"/><path d="M17,5.6 h8 l-4,5.4z" fill="#1f1f1f"/><path d="M18.6,2.6 h4.8" stroke="#1f1f1f" stroke-width="1.3"/><circle cx="34.3" cy="6.2" r="4.2" fill="none" stroke="#1f1f1f" stroke-width="1.5"/><circle cx="34.3" cy="6.2" r="1" fill="#1f1f1f"/><path d="M33,0.6 l3,1.2 l-2.6,1.7z" fill="#1f1f1f"/><rect x="44" y="1" width="9.4" height="10" rx=".8" fill="#5a5a5a" stroke="#1f1f1f" stroke-width="1.1"/><path d="M44,4 h9.4 M48.8,4 v7" stroke="#1f1f1f" stroke-width="1"/></svg>
<!-- 3D viewport -->
<svg style="left:33px;top:290px" width="836" height="354" viewBox="33 290 836 354"><defs>
<linearGradient id="sky" x1="0" y1="0" x2="0" y2="1"><stop offset="0" stop-color="#878787"/><stop offset="1" stop-color="#858585"/></linearGradient>
<linearGradient id="flr" x1="0" y1="0" x2="0" y2="1"><stop offset="0" stop-color="#7c7c7c"/><stop offset=".12" stop-color="#777777"/><stop offset=".45" stop-color="#6a696a"/><stop offset="1" stop-color="#5d5c5d"/></linearGradient>
<linearGradient id="far" x1="0" y1="0" x2="0" y2="1"><stop offset="0" stop-color="#4c4c4c" stop-opacity=".75"/><stop offset=".35" stop-color="#555" stop-opacity=".45"/><stop offset="1" stop-color="#666" stop-opacity="0"/></linearGradient>
</defs><rect x="33" y="290" width="836" height="119.0" fill="url(#sky)"/><rect x="33" y="409.0" width="836" height="11" fill="#8b8b8b"/><rect x="33" y="408.4" width="836" height="1.2" fill="#9a9a9a"/><rect x="33" y="419.6" width="836" height="224.39999999999998" fill="url(#flr)"/><g stroke="#3c3c3c" stroke-width="1" stroke-opacity=".48" fill="none"><line x1="33.0" y1="500.2" x2="869.0" y2="446.4"/><line x1="33.0" y1="465.3" x2="869.0" y2="432.1"/><line x1="33.0" y1="449.7" x2="869.0" y2="425.7"/><line x1="33.0" y1="440.9" x2="869.0" y2="422.1"/><line x1="33.0" y1="435.2" x2="869.0" y2="419.7"/><line x1="33.0" y1="431.2" x2="774.2" y2="419.6"/><line x1="33.0" y1="428.3" x2="672.0" y2="419.6"/><line x1="33.0" y1="426.1" x2="569.8" y2="419.6"/><line x1="33.0" y1="424.3" x2="467.6" y2="419.6"/><line x1="33.0" y1="422.8" x2="365.4" y2="419.6"/><line x1="33.0" y1="421.7" x2="263.2" y2="419.6"/><line x1="33.0" y1="420.7" x2="161.0" y2="419.6"/><line x1="33.0" y1="419.8" x2="58.8" y2="419.6"/><line x1="869.0" y1="509.2" x2="145.6" y2="419.6"/><line x1="869.0" y1="466.7" x2="208.5" y2="419.6"/><line x1="869.0" y1="449.6" x2="271.4" y2="419.6"/><line x1="869.0" y1="440.3" x2="334.4" y2="419.6"/><line x1="869.0" y1="434.4" x2="397.3" y2="419.6"/><line x1="869.0" y1="430.4" x2="460.2" y2="419.6"/><line x1="869.0" y1="427.5" x2="523.2" y2="419.6"/><line x1="869.0" y1="425.3" x2="586.1" y2="419.6"/><line x1="869.0" y1="423.6" x2="649.1" y2="419.6"/><line x1="869.0" y1="422.2" x2="712.0" y2="419.6"/><line x1="869.0" y1="421.0" x2="774.9" y2="419.6"/><line x1="869.0" y1="420.0" x2="837.9" y2="419.6"/></g><rect x="33" y="419.2" width="836" height="9" fill="url(#far)"/><line x1="429.1" y1="582.0" x2="82.6" y2="419.6" stroke="#383838" stroke-width="1.2" stroke-opacity="0.9"/><line x1="429.1" y1="582.0" x2="561.4" y2="644.0" stroke="#b04a58" stroke-width="1.0" stroke-opacity="0.6"/><line x1="429.1" y1="582.0" x2="869.0" y2="507.5" stroke="#4a4a9c" stroke-width="1.2" stroke-opacity="0.95"/><line x1="429.1" y1="582.0" x2="63.2" y2="644.0" stroke="#3a3a3a" stroke-width="1.2" stroke-opacity="0.9"/><line x1="426.8" y1="290" x2="426.8" y2="345" stroke="#3f9a4a" stroke-width="1.1"/><defs>
<filter id="hlblur" x="-10%" y="-10%" width="120%" height="120%"><feGaussianBlur stdDeviation="1.3"/></filter>
<filter id="soft" x="-5%" y="-5%" width="110%" height="110%"><feGaussianBlur stdDeviation=".42"/></filter>
<linearGradient id="teal1" x1="0" y1="0" x2="0" y2="1"><stop offset="0" stop-color="#4fa4b6"/><stop offset="1" stop-color="#5a97a3"/></linearGradient>
<linearGradient id="teal2" x1="0" y1="0" x2="0" y2="1"><stop offset="0" stop-color="#63a7b3"/><stop offset="1" stop-color="#4f8d98"/></linearGradient>
<pattern id="dith" width="2.6" height="2.6" patternUnits="userSpaceOnUse"><rect x="0" y="0" width="1.2" height="1.2" fill="#727272"/><rect x="1.3" y="1.3" width="1.1" height="1.1" fill="#3c3c3c"/></pattern>
<linearGradient id="teal3" x1="0" y1="0" x2="0" y2="1"><stop offset="0" stop-color="#72b6c0"/><stop offset=".35" stop-color="#3f808a"/><stop offset="1" stop-color="#2f6670"/></linearGradient>
<linearGradient id="bothl" x1="0" y1="0" x2="1" y2="0"><stop offset="0" stop-color="#d0d0d0" stop-opacity=".95"/><stop offset=".6" stop-color="#9a9a9a" stop-opacity=".6"/><stop offset="1" stop-color="#555" stop-opacity="0"/></linearGradient>
<linearGradient id="sidew" x1="0" y1="0" x2="1" y2="0"><stop offset="0" stop-color="#e3e5e6"/><stop offset=".2" stop-color="#fafafa"/><stop offset=".42" stop-color="#ffffff"/><stop offset=".8" stop-color="#fbfbfb"/><stop offset="1" stop-color="#e9ecee"/></linearGradient>
<linearGradient id="ftop" x1="0" y1="0" x2="1" y2="0"><stop offset="0" stop-color="#d8d8d8"/><stop offset=".5" stop-color="#ebebeb"/><stop offset="1" stop-color="#f3f3f3"/></linearGradient>
<linearGradient id="backb" x1="0" y1="0" x2="1" y2="0"><stop offset="0" stop-color="#a7d3e6"/><stop offset=".3" stop-color="#97c8df"/><stop offset="1" stop-color="#7db2cb"/></linearGradient>
<linearGradient id="frontb" x1="0" y1="0" x2="0" y2="1"><stop offset="0" stop-color="#93c6de"/><stop offset=".6" stop-color="#8cc1da"/><stop offset="1" stop-color="#86bbd5"/></linearGradient>
<linearGradient id="port" x1="0" y1="0" x2="0" y2="1"><stop offset="0" stop-color="#6a8db6"/><stop offset="1" stop-color="#55789c"/></linearGradient>
</defs><g filter="url(#soft)"><path d="M500.0,351.0L541.0,342.5L545.0,345.0L545.0,400.0L500.0,400.0Z" fill="#62a3ae"/><path d="M526.3,470.0C526.2,450.0 526.3,416.3 526.3,400.0C526.3,383.7 526.2,379.0 526.5,372.0C526.8,365.0 526.9,362.0 528.0,358.0C529.1,354.0 530.7,350.8 533.0,348.0C535.3,345.2 538.7,342.6 542.0,341.0C545.3,339.4 549.0,338.9 553.0,338.3C557.0,337.7 562.4,337.1 565.7,337.2C569.0,337.3 571.0,338.0 573.0,338.8C575.0,339.6 576.0,340.1 578.0,342.0C580.0,343.9 583.1,347.7 585.0,350.5C586.9,353.3 588.2,356.8 589.2,358.9C590.2,361.0 590.5,363.1 591.0,363.0C591.5,362.9 591.3,359.9 592.5,358.5C593.7,357.1 595.6,355.4 598.0,354.5C600.4,353.6 603.7,352.8 606.7,353.0C609.7,353.2 613.5,353.8 616.0,356.0C618.5,358.2 620.3,362.0 622.0,366.0C623.7,370.0 624.6,374.3 626.0,380.0C627.4,385.7 629.1,390.0 630.4,400.0C631.7,410.0 632.9,426.7 634.0,440.0C635.1,453.3 636.4,468.3 637.0,480.0C637.6,491.7 637.7,500.8 637.5,510.0C637.3,519.2 636.9,528.0 636.0,535.0C635.1,542.0 634.0,546.8 632.0,552.0C630.0,557.2 627.3,562.0 624.0,566.0C620.7,570.0 616.8,573.3 612.0,576.0C607.2,578.7 602.5,580.2 595.0,582.0C587.5,583.8 575.9,586.1 566.7,587.0C557.5,587.9 549.0,588.0 540.0,587.5C531.0,587.0 518.8,588.6 513.0,584.0C507.2,579.4 502.7,570.7 505.0,560.0C507.3,549.3 523.5,535.0 527.0,520.0C530.5,505.0 526.4,490.0 526.3,470.0Z" fill="#141414"/><path d="M590.4,357.5 L592.4,356.2 L592.6,361 L591.4,362.5Z" fill="#6aa9b3"/><path d="M515.0,540.0L528.0,536.7L534.0,553.0L544.4,564.8L559.0,572.0L559.0,574.0L515.0,573.0Z" fill="url(#teal3)"/><path d="M517,573.4 L559,573.4" stroke="#b9d6da" stroke-width=".8" stroke-dasharray="1.8 1.4" fill="none"/><path d="M543.0,497.0C541.2,488.3 543.0,458.3 543.0,440.0C543.0,421.7 542.7,386.7 543.0,375.0C543.3,363.3 543.8,365.3 545.0,362.0C546.2,358.7 548.8,354.8 551.0,353.0C553.2,351.2 557.6,350.0 559.7,349.9C561.8,349.8 563.7,351.3 565.0,352.5C566.3,353.7 567.3,355.4 568.5,358.0C569.7,360.6 571.8,364.9 573.0,369.7C574.2,374.5 575.3,382.6 576.6,390.2C577.9,397.8 580.1,411.0 581.4,420.3C582.7,429.6 584.8,444.5 585.4,452.0C586.0,459.5 585.7,465.6 585.6,470.0C585.5,474.4 585.3,478.0 585.0,481.0C584.7,484.0 584.5,487.8 583.5,490.0C582.5,492.2 580.3,494.7 578.0,496.0C575.7,497.3 571.5,498.2 568.0,498.5C564.5,498.8 558.8,498.2 555.0,498.0C551.2,497.8 544.8,505.7 543.0,497.0Z" fill="url(#teal1)"/><path d="M543.0,511.5C544.6,509.1 551.2,512.9 555.0,513.2C558.8,513.5 563.5,513.8 568.0,513.2C572.5,512.6 580.5,510.5 585.0,509.3C589.5,508.1 596.1,503.9 597.8,505.3C599.5,506.7 597.2,514.6 596.3,518.9C595.4,523.2 593.7,529.5 591.9,533.7C590.1,537.9 587.1,543.7 584.4,547.0C581.7,550.3 577.3,554.1 574.0,556.0C570.7,557.9 565.3,559.6 562.2,559.8C559.1,560.0 555.5,559.8 553.3,557.4C551.1,555.0 548.7,548.3 547.4,544.0C546.1,539.7 545.1,533.9 544.4,529.0C543.7,524.1 541.4,513.9 543.0,511.5Z" fill="url(#teal2)"/><g filter="url(#hlblur)"><path d="M535.5,525.0C535.5,515.8 535.2,490.8 535.2,470.0C535.2,449.2 535.1,416.3 535.2,400.0C535.3,383.7 535.2,379.2 535.8,372.0C536.3,364.8 536.9,361.0 538.5,357.0C540.1,353.0 542.6,350.2 545.5,348.0C548.4,345.8 552.5,344.7 556.0,344.0C559.5,343.3 563.3,343.1 566.5,343.6C569.7,344.1 572.6,345.3 575.0,347.0C577.4,348.7 580.0,352.8 581.0,354.0" fill="none" stroke="#4a4a4a" stroke-width="4.2" stroke-opacity="0.9" stroke-linecap="round"/><path d="M581.0,354.0C581.6,356.0 583.5,360.8 584.5,366.0C585.5,371.2 586.1,377.3 587.0,385.0C587.9,392.7 589.0,402.8 590.0,412.0C591.0,421.2 592.1,430.3 593.0,440.0C593.9,449.7 595.0,462.3 595.5,470.0C596.0,477.7 595.9,483.3 596.0,486.0" fill="none" stroke="#3a3a3a" stroke-width="4.5" stroke-opacity="0.8" stroke-linecap="round"/><path d="M597.0,366.0C597.7,364.6 599.3,359.2 601.0,357.5C602.7,355.8 605.0,355.8 607.0,356.0C609.0,356.2 612.0,358.5 613.0,359.0" fill="none" stroke="#4c4c4c" stroke-width="3.6" stroke-opacity="0.85" stroke-linecap="round"/><path d="M596.5,372.0C597.1,375.0 598.7,382.0 600.0,390.0C601.3,398.0 603.2,410.0 604.5,420.0C605.8,430.0 606.9,440.0 608.0,450.0C609.1,460.0 610.4,470.8 611.0,480.0C611.6,489.2 611.9,497.3 611.5,505.0C611.1,512.7 610.2,519.7 608.5,526.0C606.8,532.3 604.6,537.8 601.5,543.0C598.4,548.2 594.3,553.2 590.0,557.0C585.7,560.8 580.3,563.8 575.5,565.5C570.7,567.2 565.4,567.9 561.0,567.5C556.6,567.1 552.3,565.8 549.0,563.0C545.7,560.2 543.0,556.2 541.0,551.0C539.0,545.8 537.7,535.2 537.0,532.0" fill="none" stroke="#474747" stroke-width="6.2" stroke-opacity="0.9" stroke-linecap="round"/><path d="M544.0,504.8C546.0,505.1 551.8,506.3 556.0,506.5C560.2,506.7 564.3,506.9 569.0,506.2C573.7,505.5 579.5,504.0 584.0,502.2C588.5,500.4 594.0,496.6 596.0,495.5" fill="none" stroke="#3c3c3c" stroke-width="4.5" stroke-opacity="0.8" stroke-linecap="round"/><path d="M616.0,362.0C616.8,364.3 619.5,369.7 621.0,376.0C622.5,382.3 623.8,389.3 625.0,400.0C626.2,410.7 627.5,426.7 628.5,440.0C629.5,453.3 630.4,468.3 631.0,480.0C631.6,491.7 632.1,500.8 632.0,510.0C631.9,519.2 631.4,528.2 630.5,535.0C629.6,541.8 628.5,546.1 626.5,551.0C624.5,555.9 621.8,560.7 618.5,564.5C615.2,568.3 611.6,571.4 607.0,574.0C602.4,576.6 598.0,578.4 591.0,580.0C584.0,581.6 573.5,582.8 565.0,583.5C556.5,584.2 548.2,584.3 540.0,584.0C531.8,583.7 520.0,581.9 516.0,581.5" fill="none" stroke="#343434" stroke-width="4.2" stroke-opacity="0.85" stroke-linecap="round"/></g><path d="M506,580.2 C520,581.6 535,582.6 556,583.4 L556,587 C535,586.8 520,586.4 506,585Z" fill="url(#bothl)"/><path d="M566.0,353.5C566.7,354.6 568.7,357.1 570.0,360.0C571.3,362.9 572.7,365.8 574.0,371.0C575.3,376.2 576.2,382.7 577.6,391.0C579.0,399.3 580.9,410.8 582.4,421.0C583.9,431.2 585.7,443.8 586.4,452.0C587.1,460.2 586.7,465.2 586.6,470.0C586.5,474.8 586.1,479.2 586.0,481.0" fill="none" stroke="#16343a" stroke-width="1.2" stroke-dasharray="1.4 1.2"/><path d="M609.8,385.0C610.2,389.2 611.2,400.8 612.0,410.0C612.8,419.2 613.8,430.0 614.5,440.0C615.2,450.0 616.0,460.0 616.5,470.0C617.0,480.0 617.3,490.8 617.3,500.0C617.3,509.2 617.2,518.2 616.5,525.0C615.8,531.8 613.6,538.3 613.0,541.0" fill="none" stroke="#4a5c60" stroke-width="1.0" stroke-dasharray="1.6 1.5"/><path d="M598.8,506.0C598.6,508.2 598.4,514.3 597.4,519.0C596.4,523.7 595.0,529.2 593.0,534.0C591.0,538.8 588.5,544.1 585.5,548.0C582.5,551.9 578.9,555.0 575.0,557.2C571.1,559.4 564.3,560.5 562.2,561.2" fill="none" stroke="#a8ccd2" stroke-width="0.8" stroke-dasharray="1.6 1.5"/><path d="M544.0,510.2C546.0,510.5 552.0,511.7 556.0,512.0C560.0,512.3 563.3,512.6 568.0,512.0C572.7,511.4 579.3,509.6 584.0,508.3C588.7,507.1 594.0,505.1 596.0,504.5" fill="none" stroke="#8bb5bc" stroke-width="0.7" stroke-dasharray="1.6 1.5"/><path d="M616.8,512 C617,530 614,545 606,556 C598,566 585,571.5 566,574.5" fill="none" stroke="#4f9098" stroke-width="1" stroke-opacity=".85"/><clipPath id="silc"><path d="M345.5,392.0C345.5,366.8 345.6,383.2 346.2,380.0C346.8,376.8 347.3,375.7 349.0,372.6C350.7,369.6 353.3,364.6 356.3,361.7C359.3,358.8 362.1,357.3 367.0,355.3C371.9,353.3 379.3,351.1 385.5,349.6C391.7,348.1 397.8,347.4 404.0,346.4C410.2,345.4 416.4,344.5 422.6,343.6C428.8,342.7 434.8,341.5 441.0,340.8C447.2,340.1 453.4,339.4 459.6,339.5C465.8,339.6 471.8,340.3 478.0,341.1C484.2,341.9 490.9,342.7 496.7,344.4C502.5,346.1 508.7,348.7 513.0,351.5C517.3,354.3 520.2,357.1 522.5,361.0C524.8,364.9 525.8,365.2 526.6,375.0C527.4,384.8 527.4,404.2 527.5,420.0C527.6,435.8 527.4,453.3 527.2,470.0C527.0,486.7 527.1,507.7 526.3,520.0C525.5,532.3 524.1,536.8 522.6,544.0C521.1,551.2 518.4,557.2 517.0,563.0C515.6,568.8 515.8,574.3 514.0,579.0C512.2,583.7 509.2,587.8 506.5,591.0C503.8,594.2 502.8,595.7 498.0,598.2C493.2,600.7 484.4,604.3 478.0,606.0C471.6,607.7 465.8,608.5 459.6,608.5C453.4,608.5 447.2,607.5 441.0,606.0C434.8,604.5 428.8,602.1 422.6,599.6C416.4,597.1 410.2,594.4 404.0,591.3C397.8,588.2 391.8,584.9 385.6,581.0C379.4,577.1 372.2,572.6 367.0,568.0C361.8,563.4 357.3,557.3 354.3,553.3C351.3,549.3 350.3,547.7 349.0,544.0C347.7,540.3 346.9,556.3 346.3,531.0C345.7,505.7 345.5,417.2 345.5,392.0Z"/></clipPath><path d="M345.5,392.0C345.5,366.8 345.6,383.2 346.2,380.0C346.8,376.8 347.3,375.7 349.0,372.6C350.7,369.6 353.3,364.6 356.3,361.7C359.3,358.8 362.1,357.3 367.0,355.3C371.9,353.3 379.3,351.1 385.5,349.6C391.7,348.1 397.8,347.4 404.0,346.4C410.2,345.4 416.4,344.5 422.6,343.6C428.8,342.7 434.8,341.5 441.0,340.8C447.2,340.1 453.4,339.4 459.6,339.5C465.8,339.6 471.8,340.3 478.0,341.1C484.2,341.9 490.9,342.7 496.7,344.4C502.5,346.1 508.7,348.7 513.0,351.5C517.3,354.3 520.2,357.1 522.5,361.0C524.8,364.9 525.8,365.2 526.6,375.0C527.4,384.8 527.4,404.2 527.5,420.0C527.6,435.8 527.4,453.3 527.2,470.0C527.0,486.7 527.1,507.7 526.3,520.0C525.5,532.3 524.1,536.8 522.6,544.0C521.1,551.2 518.4,557.2 517.0,563.0C515.6,568.8 515.8,574.3 514.0,579.0C512.2,583.7 509.2,587.8 506.5,591.0C503.8,594.2 502.8,595.7 498.0,598.2C493.2,600.7 484.4,604.3 478.0,606.0C471.6,607.7 465.8,608.5 459.6,608.5C453.4,608.5 447.2,607.5 441.0,606.0C434.8,604.5 428.8,602.1 422.6,599.6C416.4,597.1 410.2,594.4 404.0,591.3C397.8,588.2 391.8,584.9 385.6,581.0C379.4,577.1 372.2,572.6 367.0,568.0C361.8,563.4 357.3,557.3 354.3,553.3C351.3,549.3 350.3,547.7 349.0,544.0C347.7,540.3 346.9,556.3 346.3,531.0C345.7,505.7 345.5,417.2 345.5,392.0Z" fill="#f1f1f1"/><g clip-path="url(#silc)"><path d="M340.0,395.0L340.0,335.0L440.0,335.0L428.0,366.0L426.5,386.0L348.0,390.0Z" fill="url(#ftop)"/><rect x="436" y="335" width="62" height="280" fill="url(#sidew)"/><path d="M478.5,335 C484,344 492,356 494.6,368 C495.4,374 495.6,382 495.6,392 L495.6,572 C495.6,582 493,591 488,598 C485,602 481,606 476,612 L540,615 L540,335Z" fill="url(#backb)"/><path d="M344.6,392.0L345.2,531.0L347.4,540.0L351.3,549.6L358.0,556.0L367.0,562.6L385.6,572.8L404.0,581.0L422.6,587.6L433.7,590.2L436.6,587.0L437.2,560.0L437.4,400.0L438.0,370.0L440.0,355.0L443.5,348.0L450.0,343.0L463.0,340.2L463.0,335.0L441.0,336.0L436.0,343.0L431.0,348.5L428.0,366.0L426.4,385.0L424.3,384.6L348.8,389.3Z" fill="url(#frontb)"/><path d="M343.0,394.0C343.1,391.7 342.9,383.8 343.5,380.0C344.1,376.2 344.8,374.3 346.5,371.0C348.2,367.7 350.9,363.0 354.0,360.0C357.1,357.0 360.0,355.1 365.0,353.0C370.0,350.9 378.2,348.8 384.0,347.5C389.8,346.2 397.3,345.4 400.0,345.0 L398.0,347.4C396.0,347.9 390.9,348.9 386.0,350.6C381.1,352.3 373.1,355.2 368.5,357.6C363.9,360.0 361.1,362.1 358.5,364.8C355.9,367.5 354.1,370.8 352.6,373.6C351.2,376.4 350.4,378.1 349.8,381.5C349.2,384.9 349.1,391.9 349.0,394.0 Z" fill="#8fc5de"/><path d="M346.0,536.0C346.9,538.7 347.8,547.0 351.3,552.0C354.8,557.0 361.3,561.9 367.0,566.0C372.7,570.1 379.4,573.4 385.6,576.5C391.8,579.6 397.8,582.1 404.0,584.5C410.2,586.9 417.3,589.5 422.6,591.0C427.9,592.5 433.8,593.1 436.0,593.5" fill="none" stroke="#cfd4d6" stroke-width="2.2" stroke-opacity=".7"/></g><path d="M437.3,400 L437.2,585" stroke="#6fa6c0" stroke-width=".9" fill="none" stroke-opacity=".9"/><path d="M349.6,389.2 L423.2,384.7 Q424.4,384.6 424.4,386 L424.4,534.5 Q424.4,543.5 417.2,540.8 L353.4,515.2 Q349.8,513.6 349.7,509.5 L348.8,390.2 Q348.8,389.3 349.6,389.2Z" fill="#0b0b0b"/><path d="M350.6,400.4L417.8,399.0L417.9,526.7L352.6,506.3Z" fill="#525252"/><path d="M350.6,400.4L417.8,399.0L417.9,526.7L352.6,506.3Z" fill="url(#dith)"/><path d="M350.6,400.4L353.4,400.3L355.3,507.2L352.6,506.3Z" fill="#7a7a7a"/><g opacity=".72"><g opacity=".75"><circle cx="372.0" cy="418.6" r="0.45" fill="#858585"/><circle cx="358.7" cy="454.8" r="0.45" fill="#777"/><circle cx="409.7" cy="427.0" r="0.7" fill="#8a8a8a"/><circle cx="377.7" cy="427.9" r="0.7" fill="#6e6e6e"/><circle cx="358.0" cy="457.4" r="0.45" fill="#9a9a9a"/><circle cx="387.5" cy="444.7" r="0.45" fill="#9a9a9a"/><circle cx="386.0" cy="417.3" r="0.5" fill="#b0b0b0"/><circle cx="385.4" cy="462.3" r="0.5" fill="#6e6e6e"/><circle cx="360.4" cy="458.3" r="0.6" fill="#9a9a9a"/><circle cx="360.3" cy="471.5" r="0.45" fill="#6e6e6e"/><circle cx="390.3" cy="455.3" r="0.7" fill="#6e6e6e"/><circle cx="400.6" cy="453.5" r="0.6" fill="#b0b0b0"/><circle cx="371.5" cy="481.7" r="0.5" fill="#858585"/><circle cx="358.8" cy="432.5" r="0.6" fill="#b0b0b0"/><circle cx="397.3" cy="434.2" r="0.45" fill="#8a8a8a"/><circle cx="383.3" cy="420.5" r="0.5" fill="#777"/><circle cx="411.4" cy="450.0" r="0.45" fill="#858585"/><circle cx="399.8" cy="464.8" r="0.6" fill="#777"/><circle cx="395.3" cy="466.3" r="0.7" fill="#6e6e6e"/><circle cx="357.8" cy="412.6" r="0.7" fill="#777"/><circle cx="395.0" cy="410.2" r="0.6" fill="#858585"/><circle cx="392.5" cy="506.5" r="0.6" fill="#b0b0b0"/><circle cx="396.9" cy="496.9" r="0.45" fill="#777"/><circle cx="411.9" cy="442.8" r="0.45" fill="#6e6e6e"/><circle cx="382.2" cy="425.9" r="0.5" fill="#777"/><circle cx="398.0" cy="446.0" r="0.45" fill="#b0b0b0"/><circle cx="363.5" cy="442.6" r="0.5" fill="#777"/><circle cx="403.7" cy="496.1" r="0.7" fill="#777"/><circle cx="415.3" cy="479.2" r="0.5" fill="#b0b0b0"/><circle cx="362.3" cy="420.8" r="0.5" fill="#9a9a9a"/><circle cx="356.0" cy="481.6" r="0.6" fill="#9a9a9a"/><circle cx="369.6" cy="418.0" r="0.6" fill="#6e6e6e"/><circle cx="389.5" cy="436.8" r="0.45" fill="#9a9a9a"/><circle cx="380.7" cy="491.3" r="0.7" fill="#858585"/><circle cx="376.6" cy="443.3" r="0.7" fill="#b0b0b0"/><circle cx="357.4" cy="410.1" r="0.7" fill="#9a9a9a"/><circle cx="363.2" cy="436.7" r="0.45" fill="#8a8a8a"/><circle cx="354.3" cy="418.0" r="0.6" fill="#8a8a8a"/><circle cx="389.6" cy="410.7" r="0.7" fill="#9a9a9a"/><circle cx="362.3" cy="428.1" r="0.6" fill="#777"/><circle cx="380.9" cy="415.3" r="0.7" fill="#b0b0b0"/><circle cx="381.5" cy="435.4" r="0.45" fill="#9a9a9a"/><circle cx="398.9" cy="482.2" r="0.5" fill="#b0b0b0"/><circle cx="383.6" cy="424.6" r="0.6" fill="#6e6e6e"/><circle cx="362.7" cy="456.0" r="0.6" fill="#8a8a8a"/><circle cx="414.7" cy="498.7" r="0.6" fill="#858585"/><circle cx="384.4" cy="495.9" r="0.5" fill="#777"/><circle cx="385.1" cy="483.2" r="0.5" fill="#777"/><circle cx="390.2" cy="485.2" r="0.5" fill="#9a9a9a"/><circle cx="403.5" cy="483.0" r="0.5" fill="#9a9a9a"/><circle cx="383.8" cy="440.1" r="0.45" fill="#8a8a8a"/><circle cx="401.5" cy="454.3" r="0.6" fill="#9a9a9a"/><circle cx="380.2" cy="497.6" r="0.6" fill="#777"/><circle cx="358.4" cy="413.5" r="0.5" fill="#b0b0b0"/><circle cx="373.2" cy="451.7" r="0.45" fill="#6e6e6e"/><circle cx="381.8" cy="469.9" r="0.45" fill="#858585"/><circle cx="404.3" cy="416.3" r="0.5" fill="#b0b0b0"/><circle cx="381.2" cy="421.8" r="0.6" fill="#858585"/><circle cx="360.1" cy="493.2" r="0.7" fill="#858585"/><circle cx="380.9" cy="478.7" r="0.5" fill="#8a8a8a"/><circle cx="363.3" cy="416.0" r="0.7" fill="#9a9a9a"/><circle cx="402.4" cy="419.2" r="0.7" fill="#6e6e6e"/><circle cx="392.6" cy="440.4" r="0.5" fill="#6e6e6e"/><circle cx="356.5" cy="478.8" r="0.45" fill="#858585"/><circle cx="384.9" cy="498.5" r="0.5" fill="#b0b0b0"/><circle cx="403.8" cy="426.3" r="0.5" fill="#777"/><circle cx="370.4" cy="427.5" r="0.6" fill="#6e6e6e"/><circle cx="368.7" cy="444.9" r="0.45" fill="#9a9a9a"/><circle cx="409.7" cy="442.4" r="0.7" fill="#b0b0b0"/><circle cx="404.2" cy="497.8" r="0.5" fill="#9a9a9a"/><circle cx="383.8" cy="405.3" r="0.5" fill="#b0b0b0"/><circle cx="389.9" cy="483.9" r="0.5" fill="#9a9a9a"/><circle cx="362.5" cy="463.2" r="0.45" fill="#8a8a8a"/><circle cx="372.6" cy="455.1" r="0.7" fill="#6e6e6e"/><circle cx="400.9" cy="414.7" r="0.45" fill="#6e6e6e"/><circle cx="367.9" cy="430.9" r="0.7" fill="#8a8a8a"/><circle cx="386.9" cy="481.7" r="0.7" fill="#8a8a8a"/><circle cx="373.2" cy="499.3" r="0.5" fill="#6e6e6e"/><circle cx="395.0" cy="451.4" r="0.7" fill="#6e6e6e"/><circle cx="383.1" cy="429.0" r="0.6" fill="#6e6e6e"/><circle cx="410.8" cy="500.9" r="0.7" fill="#9a9a9a"/><circle cx="361.5" cy="415.4" r="0.6" fill="#b0b0b0"/><circle cx="358.2" cy="426.7" r="0.5" fill="#8a8a8a"/><circle cx="393.7" cy="485.6" r="0.6" fill="#9a9a9a"/><circle cx="363.0" cy="488.1" r="0.5" fill="#b0b0b0"/><circle cx="398.3" cy="413.4" r="0.5" fill="#b0b0b0"/><circle cx="415.6" cy="495.6" r="0.7" fill="#9a9a9a"/><circle cx="415.8" cy="448.5" r="0.5" fill="#b0b0b0"/><circle cx="373.8" cy="412.8" r="0.45" fill="#777"/><circle cx="373.2" cy="449.3" r="0.45" fill="#858585"/><circle cx="376.0" cy="455.5" r="0.45" fill="#777"/><circle cx="361.4" cy="491.0" r="0.45" fill="#9a9a9a"/><circle cx="358.9" cy="429.8" r="0.6" fill="#9a9a9a"/><circle cx="399.4" cy="490.5" r="0.6" fill="#858585"/><circle cx="377.3" cy="457.6" r="0.7" fill="#6e6e6e"/><circle cx="395.2" cy="412.8" r="0.5" fill="#8a8a8a"/><circle cx="377.9" cy="410.8" r="0.45" fill="#8a8a8a"/><circle cx="402.0" cy="412.3" r="0.45" fill="#9a9a9a"/><circle cx="368.6" cy="415.6" r="0.6" fill="#8a8a8a"/><circle cx="415.8" cy="450.1" r="0.5" fill="#777"/><circle cx="357.4" cy="470.7" r="0.5" fill="#8a8a8a"/><circle cx="368.5" cy="421.5" r="0.6" fill="#777"/><circle cx="384.5" cy="424.8" r="0.5" fill="#b0b0b0"/><circle cx="369.8" cy="482.2" r="0.45" fill="#777"/><circle cx="356.0" cy="472.6" r="0.5" fill="#6e6e6e"/><circle cx="383.5" cy="428.8" r="0.45" fill="#b0b0b0"/><circle cx="392.9" cy="471.6" r="0.7" fill="#858585"/><circle cx="386.1" cy="494.4" r="0.6" fill="#6e6e6e"/><circle cx="395.1" cy="506.1" r="0.5" fill="#777"/><circle cx="404.5" cy="479.7" r="0.5" fill="#858585"/><circle cx="377.0" cy="438.7" r="0.5" fill="#8a8a8a"/><circle cx="355.8" cy="462.7" r="0.7" fill="#777"/><circle cx="362.9" cy="411.8" r="0.6" fill="#b0b0b0"/><circle cx="389.2" cy="475.3" r="0.7" fill="#8a8a8a"/><circle cx="364.4" cy="429.9" r="0.6" fill="#8a8a8a"/><circle cx="374.6" cy="436.6" r="0.6" fill="#6e6e6e"/><circle cx="368.6" cy="497.3" r="0.5" fill="#777"/><circle cx="373.7" cy="403.5" r="0.45" fill="#b0b0b0"/><circle cx="381.3" cy="454.8" r="0.5" fill="#9a9a9a"/><circle cx="382.6" cy="403.8" r="0.45" fill="#777"/><circle cx="362.6" cy="460.2" r="0.45" fill="#b0b0b0"/><circle cx="371.3" cy="465.7" r="0.5" fill="#8a8a8a"/><circle cx="392.9" cy="478.4" r="0.7" fill="#6e6e6e"/><circle cx="399.9" cy="480.3" r="0.5" fill="#b0b0b0"/><circle cx="370.4" cy="464.5" r="0.45" fill="#9a9a9a"/><circle cx="404.0" cy="480.5" r="0.7" fill="#6e6e6e"/><circle cx="397.9" cy="489.4" r="0.45" fill="#9a9a9a"/><circle cx="404.0" cy="466.6" r="0.5" fill="#858585"/><circle cx="358.6" cy="407.6" r="0.6" fill="#858585"/><circle cx="413.3" cy="445.2" r="0.45" fill="#b0b0b0"/><circle cx="390.9" cy="468.8" r="0.5" fill="#858585"/><circle cx="381.7" cy="403.7" r="0.45" fill="#8a8a8a"/><circle cx="392.5" cy="410.3" r="0.7" fill="#858585"/><circle cx="367.8" cy="410.9" r="0.5" fill="#777"/><circle cx="397.2" cy="425.3" r="0.7" fill="#858585"/><circle cx="382.4" cy="442.7" r="0.6" fill="#b0b0b0"/><circle cx="400.0" cy="469.4" r="0.5" fill="#858585"/><circle cx="358.3" cy="417.8" r="0.6" fill="#777"/><circle cx="390.1" cy="417.4" r="0.45" fill="#b0b0b0"/><circle cx="382.5" cy="501.7" r="0.5" fill="#8a8a8a"/><circle cx="393.8" cy="434.2" r="0.6" fill="#6e6e6e"/><circle cx="380.7" cy="451.0" r="0.5" fill="#8a8a8a"/><circle cx="371.2" cy="412.1" r="0.45" fill="#b0b0b0"/><circle cx="369.9" cy="411.1" r="0.7" fill="#6e6e6e"/><circle cx="415.8" cy="446.6" r="0.45" fill="#9a9a9a"/><circle cx="387.6" cy="418.2" r="0.6" fill="#6e6e6e"/><circle cx="412.7" cy="418.0" r="0.6" fill="#858585"/><circle cx="408.2" cy="480.1" r="0.7" fill="#9a9a9a"/><circle cx="408.9" cy="456.8" r="0.5" fill="#8a8a8a"/><circle cx="355.0" cy="450.1" r="0.7" fill="#b0b0b0"/><circle cx="370.7" cy="417.6" r="0.7" fill="#777"/><circle cx="372.5" cy="486.3" r="0.6" fill="#8a8a8a"/><circle cx="399.1" cy="492.4" r="0.5" fill="#8a8a8a"/><circle cx="396.6" cy="498.3" r="0.6" fill="#777"/><circle cx="375.1" cy="443.0" r="0.45" fill="#6e6e6e"/><circle cx="374.5" cy="446.4" r="0.45" fill="#777"/><circle cx="369.4" cy="408.6" r="0.6" fill="#858585"/><circle cx="391.0" cy="419.1" r="0.7" fill="#777"/><circle cx="383.2" cy="423.0" r="0.7" fill="#777"/><circle cx="408.1" cy="491.7" r="0.7" fill="#858585"/><circle cx="410.2" cy="505.9" r="0.5" fill="#6e6e6e"/><circle cx="396.5" cy="408.5" r="0.7" fill="#858585"/><circle cx="380.2" cy="479.5" r="0.6" fill="#858585"/><circle cx="382.4" cy="495.7" r="0.5" fill="#6e6e6e"/><circle cx="363.8" cy="443.9" r="0.6" fill="#777"/><circle cx="368.9" cy="475.8" r="0.6" fill="#858585"/><circle cx="376.9" cy="427.7" r="0.7" fill="#b0b0b0"/><circle cx="361.4" cy="465.3" r="0.5" fill="#8a8a8a"/><circle cx="383.2" cy="486.0" r="0.5" fill="#6e6e6e"/><circle cx="379.8" cy="437.4" r="0.7" fill="#b0b0b0"/><circle cx="361.8" cy="422.3" r="0.5" fill="#8a8a8a"/><circle cx="373.0" cy="412.6" r="0.6" fill="#9a9a9a"/><circle cx="368.8" cy="459.5" r="0.7" fill="#8a8a8a"/><circle cx="376.2" cy="478.0" r="0.7" fill="#9a9a9a"/><circle cx="369.8" cy="477.3" r="0.6" fill="#b0b0b0"/><circle cx="387.3" cy="440.9" r="0.5" fill="#858585"/><circle cx="360.3" cy="488.7" r="0.7" fill="#b0b0b0"/><circle cx="391.9" cy="448.9" r="0.45" fill="#777"/><circle cx="361.4" cy="444.6" r="0.7" fill="#b0b0b0"/><circle cx="354.7" cy="440.7" r="0.7" fill="#6e6e6e"/><circle cx="414.2" cy="431.0" r="0.5" fill="#8a8a8a"/><circle cx="363.1" cy="454.1" r="0.45" fill="#858585"/><circle cx="412.1" cy="482.9" r="0.7" fill="#858585"/><circle cx="359.7" cy="477.5" r="0.5" fill="#8a8a8a"/><circle cx="367.9" cy="492.8" r="0.6" fill="#858585"/><circle cx="413.5" cy="472.8" r="0.7" fill="#6e6e6e"/><circle cx="395.1" cy="415.3" r="0.6" fill="#8a8a8a"/><circle cx="384.5" cy="463.3" r="0.6" fill="#b0b0b0"/><circle cx="367.0" cy="462.2" r="0.6" fill="#8a8a8a"/><circle cx="416.0" cy="434.5" r="0.5" fill="#777"/><circle cx="381.1" cy="427.5" r="0.45" fill="#9a9a9a"/><circle cx="413.4" cy="481.3" r="0.45" fill="#777"/><circle cx="356.0" cy="450.9" r="0.7" fill="#858585"/><circle cx="358.7" cy="425.5" r="0.6" fill="#b0b0b0"/><circle cx="366.3" cy="406.9" r="0.7" fill="#777"/><circle cx="374.6" cy="443.3" r="0.6" fill="#8a8a8a"/><circle cx="398.1" cy="457.3" r="0.7" fill="#9a9a9a"/><circle cx="414.0" cy="438.1" r="0.5" fill="#9a9a9a"/><circle cx="380.5" cy="430.6" r="0.45" fill="#777"/><circle cx="412.8" cy="458.3" r="0.5" fill="#9a9a9a"/><circle cx="382.4" cy="495.6" r="0.5" fill="#8a8a8a"/><circle cx="410.5" cy="409.2" r="0.5" fill="#8a8a8a"/><circle cx="378.0" cy="474.8" r="0.7" fill="#9a9a9a"/><circle cx="380.1" cy="475.5" r="0.45" fill="#777"/><circle cx="416.1" cy="506.5" r="0.5" fill="#777"/><circle cx="365.4" cy="493.6" r="0.7" fill="#858585"/><circle cx="356.8" cy="466.4" r="0.6" fill="#b0b0b0"/><circle cx="415.1" cy="452.7" r="0.45" fill="#8a8a8a"/><circle cx="358.3" cy="411.4" r="0.45" fill="#b0b0b0"/><circle cx="386.9" cy="481.5" r="0.6" fill="#b0b0b0"/><circle cx="399.9" cy="436.6" r="0.45" fill="#b0b0b0"/><circle cx="357.4" cy="448.7" r="0.7" fill="#777"/><circle cx="364.9" cy="439.2" r="0.45" fill="#b0b0b0"/><circle cx="390.9" cy="429.5" r="0.7" fill="#858585"/><circle cx="356.2" cy="407.0" r="0.45" fill="#8a8a8a"/><circle cx="369.0" cy="476.6" r="0.6" fill="#6e6e6e"/><circle cx="374.5" cy="437.2" r="0.45" fill="#6e6e6e"/><circle cx="369.3" cy="473.8" r="0.6" fill="#777"/><circle cx="371.3" cy="474.6" r="0.45" fill="#6e6e6e"/><circle cx="355.7" cy="425.9" r="0.7" fill="#b0b0b0"/><circle cx="412.9" cy="446.3" r="0.7" fill="#777"/><circle cx="403.0" cy="417.7" r="0.5" fill="#b0b0b0"/><circle cx="356.0" cy="490.7" r="0.5" fill="#777"/><circle cx="389.4" cy="437.8" r="0.7" fill="#777"/><circle cx="375.0" cy="481.3" r="0.5" fill="#8a8a8a"/><circle cx="376.0" cy="419.7" r="0.45" fill="#b0b0b0"/><circle cx="392.2" cy="454.1" r="0.6" fill="#6e6e6e"/><circle cx="363.3" cy="445.0" r="0.45" fill="#8a8a8a"/><circle cx="368.5" cy="411.9" r="0.7" fill="#8a8a8a"/><circle cx="383.0" cy="475.8" r="0.5" fill="#b0b0b0"/><circle cx="367.3" cy="444.5" r="0.5" fill="#6e6e6e"/><circle cx="398.9" cy="493.2" r="0.45" fill="#858585"/><circle cx="400.7" cy="435.1" r="0.6" fill="#777"/><circle cx="375.6" cy="477.1" r="0.7" fill="#9a9a9a"/><circle cx="367.8" cy="427.8" r="0.6" fill="#9a9a9a"/><circle cx="408.0" cy="466.6" r="0.45" fill="#777"/><circle cx="377.2" cy="502.2" r="0.5" fill="#6e6e6e"/><circle cx="391.9" cy="414.0" r="0.45" fill="#b0b0b0"/><circle cx="360.2" cy="449.2" r="0.7" fill="#9a9a9a"/><circle cx="409.9" cy="407.6" r="0.5" fill="#777"/><circle cx="360.6" cy="422.0" r="0.5" fill="#6e6e6e"/><circle cx="411.2" cy="444.5" r="0.7" fill="#9a9a9a"/><circle cx="389.5" cy="483.7" r="0.45" fill="#858585"/><circle cx="360.6" cy="460.7" r="0.6" fill="#6e6e6e"/><circle cx="366.3" cy="439.7" r="0.45" fill="#9a9a9a"/><circle cx="365.4" cy="428.6" r="0.5" fill="#6e6e6e"/><circle cx="403.3" cy="491.3" r="0.6" fill="#b0b0b0"/><circle cx="364.4" cy="434.1" r="0.45" fill="#9a9a9a"/><circle cx="401.9" cy="462.4" r="0.7" fill="#8a8a8a"/><circle cx="360.0" cy="441.6" r="0.5" fill="#6e6e6e"/><circle cx="391.2" cy="413.0" r="0.7" fill="#9a9a9a"/><circle cx="395.1" cy="446.9" r="0.6" fill="#777"/><circle cx="377.4" cy="408.7" r="0.6" fill="#858585"/><circle cx="377.1" cy="405.3" r="0.5" fill="#777"/><circle cx="376.2" cy="444.3" r="0.7" fill="#8a8a8a"/><circle cx="409.2" cy="450.0" r="0.7" fill="#8a8a8a"/><circle cx="387.6" cy="441.4" r="0.5" fill="#9a9a9a"/><circle cx="355.7" cy="455.8" r="0.7" fill="#858585"/><circle cx="359.7" cy="463.0" r="0.5" fill="#777"/><circle cx="362.2" cy="431.1" r="0.5" fill="#6e6e6e"/><circle cx="410.8" cy="415.3" r="0.5" fill="#b0b0b0"/><circle cx="371.6" cy="485.8" r="0.7" fill="#8a8a8a"/><circle cx="372.1" cy="463.7" r="0.7" fill="#858585"/><circle cx="359.7" cy="471.4" r="0.5" fill="#858585"/><circle cx="391.9" cy="492.6" r="0.7" fill="#6e6e6e"/><circle cx="389.7" cy="424.0" r="0.5" fill="#b0b0b0"/><circle cx="386.5" cy="407.7" r="0.5" fill="#6e6e6e"/><circle cx="375.5" cy="415.9" r="0.5" fill="#9a9a9a"/><circle cx="357.1" cy="457.0" r="0.45" fill="#858585"/><circle cx="393.3" cy="437.7" r="0.7" fill="#b0b0b0"/><circle cx="386.1" cy="468.1" r="0.7" fill="#777"/><circle cx="371.2" cy="428.4" r="0.6" fill="#b0b0b0"/><circle cx="379.6" cy="448.1" r="0.45" fill="#8a8a8a"/><circle cx="390.3" cy="454.6" r="0.7" fill="#9a9a9a"/><circle cx="399.9" cy="486.5" r="0.5" fill="#b0b0b0"/><circle cx="402.8" cy="446.7" r="0.5" fill="#8a8a8a"/><circle cx="374.3" cy="440.2" r="0.45" fill="#b0b0b0"/><circle cx="356.4" cy="416.1" r="0.6" fill="#858585"/><circle cx="400.7" cy="458.4" r="0.7" fill="#8a8a8a"/><circle cx="392.7" cy="485.3" r="0.45" fill="#8a8a8a"/><circle cx="416.0" cy="484.8" r="0.5" fill="#8a8a8a"/><circle cx="362.4" cy="488.2" r="0.5" fill="#777"/><circle cx="394.8" cy="479.3" r="0.45" fill="#9a9a9a"/><circle cx="404.5" cy="469.5" r="0.5" fill="#777"/><circle cx="372.6" cy="464.4" r="0.5" fill="#b0b0b0"/><circle cx="369.2" cy="497.3" r="0.5" fill="#b0b0b0"/><circle cx="388.7" cy="467.4" r="0.6" fill="#9a9a9a"/><circle cx="374.9" cy="423.6" r="0.5" fill="#b0b0b0"/><circle cx="391.2" cy="432.7" r="0.7" fill="#777"/><circle cx="364.2" cy="479.2" r="0.45" fill="#8a8a8a"/><circle cx="391.3" cy="441.3" r="0.45" fill="#b0b0b0"/><circle cx="368.4" cy="456.2" r="0.6" fill="#b0b0b0"/><circle cx="369.8" cy="500.0" r="0.5" fill="#6e6e6e"/><circle cx="374.9" cy="479.6" r="0.5" fill="#b0b0b0"/><circle cx="364.6" cy="475.4" r="0.6" fill="#8a8a8a"/><circle cx="403.4" cy="430.9" r="0.6" fill="#858585"/><circle cx="397.8" cy="482.6" r="0.5" fill="#9a9a9a"/><circle cx="370.8" cy="465.3" r="0.6" fill="#b0b0b0"/><circle cx="408.6" cy="417.8" r="0.45" fill="#9a9a9a"/><circle cx="355.2" cy="403.9" r="0.6" fill="#777"/></g><path d="M375.7,401.3L386.7,401.1L386.8,404.5L375.8,404.6Z" fill="#e6d23c"/><path d="M392.4,405.7L394.1,405.7L394.9,511.4L393.2,510.9Z" fill="#595959"/><path d="M390.9,438.5L394.4,438.8L394.6,462.9L391.1,462.4Z" fill="#7d7d7d"/><path d="M409.8,407.6L417.4,407.6L417.4,408.4L409.8,408.3Z" fill="#4fd06a"/><path d="M409.9,410.4L417.4,410.5L417.4,411.3L409.9,411.2Z" fill="#4fd06a"/><path d="M409.9,413.2L417.4,413.4L417.4,414.1L409.9,414.0Z" fill="#4fd06a"/><path d="M409.8,407.6L411.9,407.6L411.9,414.0L409.9,414.0Z" fill="#4fd06a" opacity=".8"/><path d="M415.3,410.8L417.4,410.9L417.4,414.1L415.3,414.1Z" fill="#4fd06a" opacity=".8"/><path d="M409.9,415.3L417.4,415.4L417.4,416.2L409.9,416.1Z" fill="#4fd06a"/><path d="M409.9,418.1L417.4,418.3L417.4,419.1L409.9,418.9Z" fill="#4fd06a"/><path d="M409.9,420.9L417.4,421.2L417.4,422.0L409.9,421.7Z" fill="#4fd06a"/><path d="M409.9,415.3L411.9,415.3L412.0,421.8L409.9,421.7Z" fill="#4fd06a" opacity=".8"/><path d="M415.3,418.7L417.4,418.7L417.4,422.0L415.3,421.9Z" fill="#4fd06a" opacity=".8"/><path d="M409.9,423.6L417.4,423.9L417.4,424.6L409.9,424.3Z" fill="#45bdb0"/><path d="M409.9,426.1L417.4,426.5L417.4,427.2L409.9,426.8Z" fill="#45bdb0"/><path d="M409.9,428.7L417.4,429.1L417.4,429.8L409.9,429.3Z" fill="#45bdb0"/><path d="M409.9,423.6L412.0,423.7L412.0,429.5L409.9,429.3Z" fill="#45bdb0" opacity=".8"/><path d="M415.3,426.8L417.4,426.9L417.4,429.8L415.3,429.7Z" fill="#45bdb0" opacity=".8"/><path d="M409.9,430.6L417.4,431.1L417.4,431.8L409.9,431.3Z" fill="#45bdb0"/><path d="M409.9,433.1L417.4,433.7L417.4,434.4L409.9,433.8Z" fill="#45bdb0"/><path d="M409.9,435.7L417.4,436.2L417.4,436.9L409.9,436.3Z" fill="#45bdb0"/><path d="M409.9,430.6L412.0,430.8L412.0,436.5L409.9,436.3Z" fill="#45bdb0" opacity=".8"/><path d="M415.3,433.9L417.4,434.0L417.4,436.9L415.3,436.8Z" fill="#45bdb0" opacity=".8"/><rect x="354.8" y="409.7" width="2.6" height="1" fill="#58b868" opacity=".8"/><rect x="361.3" y="410.9" width="2.6" height="1" fill="#58b868" opacity=".8"/><rect x="395.3" y="407.7" width="2.6" height="1" fill="#4a9a5a" opacity=".8"/><rect x="401.2" y="411.5" width="2.6" height="1" fill="#4a9a5a" opacity=".8"/><rect x="396.9" y="423.8" width="2.6" height="1" fill="#3fa7a0" opacity=".8"/><rect x="401.3" y="430.3" width="2.6" height="1" fill="#3fa7a0" opacity=".8"/><rect x="355.9" y="437.1" width="2.6" height="1" fill="#a05050" opacity=".8"/><rect x="367.7" y="441.6" width="2.6" height="1" fill="#a05050" opacity=".8"/><rect x="377.2" y="444.9" width="2.6" height="1" fill="#a85858" opacity=".8"/><rect x="361.7" y="439.9" width="2.6" height="1" fill="#8c4a4a" opacity=".8"/><rect x="402.6" y="444.9" width="4.4" height="1.8" fill="#e8e8e8"/><ellipse cx="403.9" cy="456.4" rx="4" ry="3.4" fill="#c24a58"/><path d="M399.5,468.9 l3,1 l3,-2.6 M400.1,473.4 l2.4,-2 l2.6,1.6" stroke="#d8d050" stroke-width="1" fill="none"/><path d="M356.5,463.2L359.2,463.6L359.3,469.5L356.6,468.9Z" fill="#e0e0e0"/><path d="M360.7,463.9L363.4,464.4L363.5,470.3L360.7,469.7Z" fill="#e0e0e0"/><path d="M364.9,464.7L367.7,465.1L367.8,471.1L365.0,470.6Z" fill="#e0e0e0"/><path d="M369.3,465.4L372.2,465.9L372.3,472.0L369.4,471.4Z" fill="#e0e0e0"/><path d="M373.8,466.2L376.8,466.7L376.9,472.8L373.9,472.3Z" fill="#e0e0e0"/><path d="M378.5,467.0L381.5,467.5L381.6,473.8L378.5,473.2Z" fill="#e0e0e0"/><path d="M383.2,467.8L386.3,468.4L386.4,474.7L383.3,474.1Z" fill="#e0e0e0"/><path d="M388.1,468.7L391.3,469.3L391.4,475.6L388.2,475.0Z" fill="#e0e0e0"/><path d="M355.7,468.8L393.9,476.1L394.0,477.7L355.8,470.2Z" fill="#c4c4c4"/><rect x="357.5" y="477.1" width="2.6" height="1.2" fill="#c87848"/><rect x="365.1" y="477.6" width="2.6" height="1.2" fill="#b06848"/><rect x="378.1" y="484.4" width="2.6" height="1.2" fill="#a8c048"/><rect x="380.7" y="486.7" width="2.6" height="1.2" fill="#a8c048"/><rect x="376.2" y="486.8" width="2.6" height="1.2" fill="#98b040"/><rect x="405.9" y="487.6" width="2.6" height="1.2" fill="#c89868"/><rect x="407.4" y="492.9" width="2.6" height="1.2" fill="#c89868"/><rect x="405.9" y="497.4" width="2.6" height="1.2" fill="#c89868"/><rect x="407.4" y="502.6" width="2.6" height="1.2" fill="#c89868"/><rect x="405.9" y="507.1" width="2.6" height="1.2" fill="#c89868"/></g><path d="M352.4,496.0L401.3,509.7L401.3,521.5L352.6,506.3Z" fill="#858585"/><rect x="355.3" y="500.3" width="2.2" height="4" fill="#c8c8c8" opacity=".85"/><rect x="360.3" y="501.8" width="2.2" height="4" fill="#c8c8c8" opacity=".85"/><rect x="365.4" y="503.3" width="2.2" height="4" fill="#c8c8c8" opacity=".85"/><rect x="370.7" y="504.8" width="2.2" height="4" fill="#c8c8c8" opacity=".85"/><rect x="376.2" y="506.5" width="2.2" height="4" fill="#c8c8c8" opacity=".85"/><rect x="381.8" y="508.1" width="2.2" height="4" fill="#c8c8c8" opacity=".85"/><rect x="387.6" y="509.8" width="2.2" height="4" fill="#c8c8c8" opacity=".85"/><rect x="393.6" y="511.6" width="2.2" height="4" fill="#c8c8c8" opacity=".85"/><path d="M400.9,506.6L417.9,511.2L417.9,526.7L401.0,521.4Z" fill="#e2a460"/><rect x="408.8" y="513.8" width="1.4" height="6" fill="#b87830" opacity=".8"/><path d="M348.8,527.6L357.1,531.0L357.2,545.8L349.2,541.6Z" fill="#f3f3f3" stroke="#f3f3f3" stroke-width="1.1" stroke-linejoin="round"/><circle cx="352.0" cy="536.9" r="0.6" fill="#2a2a2a"/><circle cx="354.7" cy="536.3" r="0.8" fill="#2a2a2a"/><circle cx="351.3" cy="532.6" r="0.6" fill="#2a2a2a"/><circle cx="352.1" cy="534.4" r="0.8" fill="#2a2a2a"/><circle cx="353.0" cy="539.2" r="0.6" fill="#2a2a2a"/><path d="M360.8,532.2L370.0,536.0L370.0,552.8L360.9,548.2Z" fill="#f3f3f3" stroke="#f3f3f3" stroke-width="1.1" stroke-linejoin="round"/><circle cx="365.0" cy="545.2" r="0.5" fill="#2a2a2a"/><circle cx="366.0" cy="545.2" r="0.8" fill="#2a2a2a"/><circle cx="365.0" cy="538.4" r="0.5" fill="#2a2a2a"/><circle cx="364.1" cy="546.0" r="0.5" fill="#2a2a2a"/><circle cx="364.6" cy="538.5" r="0.6" fill="#2a2a2a"/><path d="M374.7,535.0L388.1,540.6L388.3,566.8L374.8,560.0Z" fill="#f3f3f3" stroke="#f3f3f3" stroke-width="1.1" stroke-linejoin="round"/><circle cx="381.4" cy="552.4" r="0.6" fill="#2a2a2a"/><circle cx="382.3" cy="554.0" r="0.6" fill="#2a2a2a"/><circle cx="382.4" cy="551.2" r="0.5" fill="#2a2a2a"/><circle cx="383.0" cy="547.4" r="0.5" fill="#2a2a2a"/><circle cx="381.5" cy="548.7" r="0.8" fill="#2a2a2a"/><path d="M394.6,546.0L405.6,550.6L405.8,569.6L394.8,564.6Z" fill="#f3f3f3" stroke="#f3f3f3" stroke-width="1.1" stroke-linejoin="round"/><circle cx="399.9" cy="558.7" r="0.6" fill="#2a2a2a"/><circle cx="399.9" cy="560.4" r="0.8" fill="#2a2a2a"/><circle cx="399.6" cy="558.4" r="0.8" fill="#2a2a2a"/><circle cx="399.1" cy="556.4" r="0.5" fill="#2a2a2a"/><circle cx="401.6" cy="561.6" r="0.8" fill="#2a2a2a"/><path d="M413.0,553.4L424.9,558.2L425.0,573.4L413.2,568.6Z" fill="#f3f3f3" stroke="#f3f3f3" stroke-width="1.1" stroke-linejoin="round"/><circle cx="419.8" cy="565.0" r="0.6" fill="#2a2a2a"/><circle cx="420.9" cy="566.6" r="0.8" fill="#2a2a2a"/><circle cx="417.4" cy="564.6" r="0.8" fill="#2a2a2a"/><circle cx="420.4" cy="564.0" r="0.6" fill="#2a2a2a"/><circle cx="417.5" cy="563.3" r="0.8" fill="#2a2a2a"/><rect x="474.6" y="383.8" width="39.6" height="70.6" rx="2.2" fill="url(#port)" stroke="#86a6c8" stroke-width=".9"/><rect x="484" y="395" width="21.6" height="36" rx="1" fill="#3c4046"/><rect x="485.2" y="398.6" width="9.8" height="28.4" fill="#6d7176"/><rect x="496.8" y="396.6" width="7.6" height="33" fill="#2c2c2a"/><rect x="495" y="396" width="1.6" height="34.6" fill="#9a9a98"/><path d="M486,403 h8 M486,407 h8 M486,411 h8 M486,415 h8 M486,419 h8 M486,423 h8" stroke="#5a5e63" stroke-width=".8"/><circle cx="498.6" cy="449.5" r=".9" fill="#1d2f48"/><text transform="translate(480.9,501.6) rotate(-90)" font-family="Liberation Sans,sans-serif" font-size="10.3" letter-spacing=".35" fill="#222" stroke="#222" stroke-width=".25">DC 5V</text><g fill="none" stroke="#1e1e1e" stroke-width="1"><path d="M490.4,474.5 V498.5"/><path d="M490.4,491 C487.5,489.5 487,487.5 487,484.5"/><path d="M490.4,488 C493.2,486.5 493.6,485 493.6,483"/></g><circle cx="490.4" cy="474.6" r="1.3" fill="#1e1e1e"/><path d="M488.6,497 h3.6 l-1.8,2.8z" fill="#1e1e1e"/><rect x="485.9" y="482.6" width="2.2" height="2.2" fill="#1e1e1e"/><path d="M492.4,483.4 l2.6,0 l-1.3,-2.2z" fill="#1e1e1e"/><g fill="none" stroke="#1d566c" stroke-width="1"><rect x="503.2" y="464.2" width="3.8" height="17.4" rx="1.9"/><path d="M505.1,481.6 V504"/><path d="M501,493.5 C501,487 503,485.5 505.1,485.5 C507.3,485.5 509.4,487 509.4,493.5 V498"/><path d="M501,489.5 v4"/><circle cx="500" cy="500.4" r="1.3"/><circle cx="509.4" cy="499.8" r="1.4"/><circle cx="505.1" cy="505.4" r="1.4"/></g><path d="M512.3,475.6 l3.4,2 v2.4 h-3.4z M512.2,488.6 l3.2,1.6 l-.8,1 l-1.4,-.8 l.6,3 l-1,.2z" fill="#123a4c"/><path d="M495.6,489 V517" stroke="#2c3a40" stroke-width=".8"/><rect x="492" y="517.2" width="18.6" height="22" rx="2.6" fill="#e6e6e6" stroke="#c9ced0" stroke-width=".8"/><ellipse cx="501.6" cy="528.6" rx="5.5" ry="6.9" fill="#d4d4d4" stroke="#3a3a3a" stroke-width="1"/><path d="M505.8,524 A5.5,6.9 0 0 1 506,533" stroke="#b05a50" stroke-width="1" fill="none" stroke-opacity=".7"/></g><rect x="33" y="290" width="105" height="354" fill="#000" fill-opacity=".055"/><rect x="763" y="290" width="106" height="354" fill="#000" fill-opacity=".055"/><g stroke-width="1.2" fill="none"><path d="M61.5,614.2 V598" stroke="#4ec04e"/><path d="M61.5,614.2 L75,611.6" stroke="#4a52c8"/><path d="M61.5,614.2 L73.5,616.6" stroke="#d04a5a"/></g><text x="59" y="596.8" font-size="7" fill="#58c858" font-family="Liberation Sans,sans-serif">Y</text><text x="74.5" y="613.5" font-size="7" fill="#5058d0" font-family="Liberation Sans,sans-serif">Z</text><text x="70.5" y="620" font-size="7" fill="#d8505e" font-family="Liberation Sans,sans-serif">X</text><rect x="33.5" y="290.5" width="835" height="353" fill="none" stroke="#a2a2a2" stroke-width="1"/></svg>
<div style="left:35.6px;top:293.2px;width:50.0px;height:11.2px;background:#6a696a;border-radius:1px;opacity:.8;"></div>
<span class="t " style="left:38.0px;top:292.4px;height:14px;line-height:14px;font-size:9.4px;color:#dedede;letter-spacing:-0.255px;">Perspective</span>
<div style="left:761.5px;top:628.0px;width:103.5px;height:11.2px;background:#6e6d6e;opacity:.85;"></div>
<span class="t " style="left:763.3px;top:626.8px;height:14px;line-height:14px;font-size:9.3px;color:#e4e4e4;letter-spacing:-0.062px;">Grid Spacing : 100 cm</span>
<!-- timeline ruler -->
<div style="left:33.0px;top:644.0px;width:840.0px;height:25.0px;background:#454545;"></div>
<div style="left:40.0px;top:646.0px;width:772.0px;height:21.5px;background:#3d3d3d;"></div>
<div style="left:34px;top:648px;width:4.6px;height:18.4px;background-image:radial-gradient(circle,#777 0.6px,transparent 0.9px);background-size:2.3px 2.3px;"></div>
<div class="ticks" style="left:0;top:0;width:880px;height:670px"><i style="left:44.3px;top:660.6px;height:5.6px"></i><i style="left:54.8px;top:661.8px;height:4.4px"></i><i style="left:65.4px;top:661.8px;height:4.4px"></i><i style="left:75.9px;top:661.8px;height:4.4px"></i><i style="left:86.5px;top:660.6px;height:5.6px"></i><i style="left:97.0px;top:661.8px;height:4.4px"></i><i style="left:107.6px;top:661.8px;height:4.4px"></i><i style="left:118.1px;top:661.8px;height:4.4px"></i><i style="left:128.7px;top:660.6px;height:5.6px"></i><i style="left:139.2px;top:661.8px;height:4.4px"></i><i style="left:149.8px;top:661.8px;height:4.4px"></i><i style="left:160.3px;top:661.8px;height:4.4px"></i><i style="left:170.8px;top:660.6px;height:5.6px"></i><i style="left:181.4px;top:661.8px;height:4.4px"></i><i style="left:191.9px;top:661.8px;height:4.4px"></i><i style="left:202.5px;top:661.8px;height:4.4px"></i><i style="left:213.0px;top:660.6px;height:5.6px"></i><i style="left:223.6px;top:661.8px;height:4.4px"></i><i style="left:234.1px;top:661.8px;height:4.4px"></i><i style="left:244.7px;top:661.8px;height:4.4px"></i><i style="left:255.2px;top:660.6px;height:5.6px"></i><i style="left:265.7px;top:661.8px;height:4.4px"></i><i style="left:276.3px;top:661.8px;height:4.4px"></i><i style="left:286.8px;top:661.8px;height:4.4px"></i><i style="left:297.4px;top:649px;height:17px"></i><i style="left:307.9px;top:661.8px;height:4.4px"></i><i style="left:318.5px;top:661.8px;height:4.4px"></i><i style="left:329.0px;top:661.8px;height:4.4px"></i><i style="left:339.6px;top:660.6px;height:5.6px"></i><i style="left:350.1px;top:661.8px;height:4.4px"></i><i style="left:360.7px;top:661.8px;height:4.4px"></i><i style="left:371.2px;top:661.8px;height:4.4px"></i><i style="left:381.7px;top:660.6px;height:5.6px"></i><i style="left:392.3px;top:661.8px;height:4.4px"></i><i style="left:402.8px;top:661.8px;height:4.4px"></i><i style="left:413.4px;top:661.8px;height:4.4px"></i><i style="left:423.9px;top:660.6px;height:5.6px"></i><i style="left:434.5px;top:661.8px;height:4.4px"></i><i style="left:445.0px;top:661.8px;height:4.4px"></i><i style="left:455.6px;top:661.8px;height:4.4px"></i><i style="left:466.1px;top:660.6px;height:5.6px"></i><i style="left:476.6px;top:661.8px;height:4.4px"></i><i style="left:487.2px;top:661.8px;height:4.4px"></i><i style="left:497.7px;top:661.8px;height:4.4px"></i><i style="left:508.3px;top:660.6px;height:5.6px"></i><i style="left:518.8px;top:661.8px;height:4.4px"></i><i style="left:529.4px;top:661.8px;height:4.4px"></i><i style="left:539.9px;top:661.8px;height:4.4px"></i><i style="left:550.5px;top:649px;height:17px"></i><i style="left:561.0px;top:661.8px;height:4.4px"></i><i style="left:571.5px;top:661.8px;height:4.4px"></i><i style="left:582.1px;top:661.8px;height:4.4px"></i><i style="left:592.6px;top:660.6px;height:5.6px"></i><i style="left:603.2px;top:661.8px;height:4.4px"></i><i style="left:613.7px;top:661.8px;height:4.4px"></i><i style="left:624.3px;top:661.8px;height:4.4px"></i><i style="left:634.8px;top:660.6px;height:5.6px"></i><i style="left:645.4px;top:661.8px;height:4.4px"></i><i style="left:655.9px;top:661.8px;height:4.4px"></i><i style="left:666.5px;top:661.8px;height:4.4px"></i><i style="left:677.0px;top:660.6px;height:5.6px"></i><i style="left:687.5px;top:661.8px;height:4.4px"></i><i style="left:698.1px;top:661.8px;height:4.4px"></i><i style="left:708.6px;top:661.8px;height:4.4px"></i><i style="left:719.2px;top:660.6px;height:5.6px"></i><i style="left:729.7px;top:661.8px;height:4.4px"></i><i style="left:740.3px;top:661.8px;height:4.4px"></i><i style="left:750.8px;top:661.8px;height:4.4px"></i><i style="left:761.4px;top:660.6px;height:5.6px"></i><i style="left:771.9px;top:661.8px;height:4.4px"></i><i style="left:782.4px;top:661.8px;height:4.4px"></i><i style="left:793.0px;top:661.8px;height:4.4px"></i><i style="left:803.5px;top:649px;height:17px"></i></div>
<span class="t " style="left:50.0px;top:645.6px;height:14px;line-height:14px;font-size:9.3px;color:#c4c4c4;">0</span>
<span class="t " style="left:84.1px;top:645.6px;height:14px;line-height:14px;font-size:9.3px;color:#c4c4c4;">4</span>
<span class="t " style="left:126.3px;top:645.6px;height:14px;line-height:14px;font-size:9.3px;color:#c4c4c4;">8</span>
<span class="t " style="left:165.9px;top:645.6px;height:14px;line-height:14px;font-size:9.3px;color:#c4c4c4;">12</span>
<span class="t " style="left:208.0px;top:645.6px;height:14px;line-height:14px;font-size:9.3px;color:#c4c4c4;">16</span>
<span class="t " style="left:250.2px;top:645.6px;height:14px;line-height:14px;font-size:9.3px;color:#c4c4c4;">20</span>
<span class="t " style="left:292.4px;top:645.6px;height:14px;line-height:14px;font-size:9.3px;color:#c4c4c4;">24</span>
<span class="t " style="left:334.6px;top:645.6px;height:14px;line-height:14px;font-size:9.3px;color:#c4c4c4;">28</span>
<span class="t " style="left:376.8px;top:645.6px;height:14px;line-height:14px;font-size:9.3px;color:#c4c4c4;">32</span>
<span class="t " style="left:418.9px;top:645.6px;height:14px;line-height:14px;font-size:9.3px;color:#c4c4c4;">36</span>
<span class="t " style="left:461.1px;top:645.6px;height:14px;line-height:14px;font-size:9.3px;color:#c4c4c4;">40</span>
<span class="t " style="left:503.3px;top:645.6px;height:14px;line-height:14px;font-size:9.3px;color:#c4c4c4;">44</span>
<span class="t " style="left:545.5px;top:645.6px;height:14px;line-height:14px;font-size:9.3px;color:#c4c4c4;">48</span>
<span class="t " style="left:587.7px;top:645.6px;height:14px;line-height:14px;font-size:9.3px;color:#c4c4c4;">52</span>
<span class="t " style="left:629.8px;top:645.6px;height:14px;line-height:14px;font-size:9.3px;color:#c4c4c4;">56</span>
<span class="t " style="left:672.0px;top:645.6px;height:14px;line-height:14px;font-size:9.3px;color:#c4c4c4;">60</span>
<span class="t " style="left:714.2px;top:645.6px;height:14px;line-height:14px;font-size:9.3px;color:#c4c4c4;">64</span>
<span class="t " style="left:756.4px;top:645.6px;height:14px;line-height:14px;font-size:9.3px;color:#c4c4c4;">68</span>
<span class="t " style="left:793.2px;top:645.6px;height:14px;line-height:14px;font-size:9.3px;color:#c4c4c4;">72</span>
<div style="left:41.0px;top:648.0px;width:7.7px;height:11.6px;background:#57d98a;border-radius:1px;"></div>
<div style="left:814.0px;top:649.5px;width:54.5px;height:13.0px;background:#3a3a3a;border-radius:2px;border:1px solid #333;"></div>
<span class="t " style="left:819.0px;top:649.2px;height:14px;line-height:14px;font-size:9.3px;color:#c8c8c8;">0 F</span>
<svg style="left:861.0px;top:652.0px;" width="5" height="8" viewBox="0 0 5 8" ><path d="M2.2,0 L4.4,3 H0Z M0,4.6 H4.4 L2.2,7.6Z" fill="#9a9a9a"/></svg>
<!-- transport -->
<div style="left:34px;top:676px;width:4.6px;height:11.5px;background-image:radial-gradient(circle,#777 0.6px,transparent 0.9px);background-size:2.3px 2.3px;"></div>
<div style="left:40.4px;top:673.7px;width:53.6px;height:13.0px;background:#3a3a3a;border-radius:2px;border:1px solid #343434;"></div>
<span class="t " style="left:45.0px;top:673.4px;height:14px;line-height:14px;font-size:9.3px;color:#c8c8c8;">0 F</span>
<svg style="left:86.5px;top:676.2px;" width="5" height="8" viewBox="0 0 5 8" ><path d="M2.2,0 L4.4,3 H0Z M0,4.6 H4.4 L2.2,7.6Z" fill="#9a9a9a"/></svg>
<div style="left:100.5px;top:673.5px;width:287.5px;height:13.0px;background:linear-gradient(#8d8d8d,#6c6c6c);border-radius:2.5px;"></div>
<div style="left:105.0px;top:677.2px;width:5.0px;height:5.6px;background:#e6e6e6;clip-path:polygon(100% 0,100% 100%,0 50%);"></div>
<span class="t " style="left:112.0px;top:673.2px;height:14px;line-height:14px;font-size:9.3px;color:#5f5f5f;">0 F</span>
<span class="t " style="left:362.0px;top:673.2px;height:14px;line-height:14px;font-size:9.3px;color:#5c5c5c;">72 F</span>
<div style="left:379.0px;top:677.2px;width:5.0px;height:5.6px;background:#e6e6e6;clip-path:polygon(0 0,0 100%,100% 50%);"></div>
<div style="left:393.0px;top:673.7px;width:54.0px;height:13.0px;background:#3a3a3a;border-radius:2px;border:1px solid #343434;"></div>
<span class="t " style="left:397.5px;top:673.4px;height:14px;line-height:14px;font-size:9.3px;color:#c8c8c8;">72 F</span>
<svg style="left:440.5px;top:676.2px;" width="5" height="8" viewBox="0 0 5 8" ><path d="M2.2,0 L4.4,3 H0Z M0,4.6 H4.4 L2.2,7.6Z" fill="#9a9a9a"/></svg>
<svg style="left:455.0px;top:668.0px;" width="418" height="26" viewBox="0 0 418 26" ><rect x="2.6" y="2" width="22.0" height="21.6" rx="1.6" fill="url(#btn)"/><path d="M8.000000000000023,8.200000000000001 v9.2" stroke="#161616" stroke-width="2.3"/><path d="M9.000000000000023,12.8 l5.6,-4.8 l-1.2,4.8 l1.2,4.8z M14.200000000000022,12.8 l5.6,-4.8 l-1.2,4.8 l1.2,4.8z" fill="#161616" stroke="#161616" stroke-width=".8" stroke-linejoin="round"/><rect x="34.0" y="2" width="114.0" height="21.6" rx="1.6" fill="url(#btn)"/><rect x="56.4" y="2" width=".8" height="21.6" fill="#5a5a5a"/><rect x="79.2" y="2" width=".8" height="21.6" fill="#5a5a5a"/><rect x="102.0" y="2" width=".8" height="21.6" fill="#5a5a5a"/><rect x="124.8" y="2" width=".8" height="21.6" fill="#5a5a5a"/><path d="M49.8,9.200000000000001 A5.6,5.6 0 1 0 49.8,16.400000000000002" fill="none" stroke="#161616" stroke-width="3.8"/><path d="M47.0,20.4 l5.8,-2.2 l-4.4,-3.6z" fill="#161616"/><path d="M62.6,12.8 l6,-3.8 v7.6z" fill="#161616"/><path d="M72.2,8.200000000000001 q-3,4.6 0,9.2" fill="none" stroke="#161616" stroke-width="2.1"/><path d="M86.0,6.800000000000001 L97.4,12.8 L86.0,18.8Z" fill="#62dc90" stroke="#1c5a34" stroke-width="1.4" stroke-linejoin="round"/><path d="M88.4,10.4 L93.0,12.8 L88.4,15.200000000000001Z" fill="#8ff0b0"/><path d="M119.4,12.8 l-6,-3.8 v7.6z" fill="#161616"/><path d="M109.8,8.200000000000001 q3,4.6 0,9.2" fill="none" stroke="#161616" stroke-width="2.1"/><path d="M132.2,9.200000000000001 A5.6,5.6 0 1 1 132.2,16.400000000000002" fill="none" stroke="#161616" stroke-width="3.8"/><path d="M135.0,20.4 l-5.8,-2.2 l4.4,-3.6z" fill="#161616"/><rect x="158.0" y="2" width="22.0" height="21.6" rx="1.6" fill="url(#btn)"/><path d="M174.6,8.200000000000001 v9.2" stroke="#161616" stroke-width="2.3"/><path d="M173.6,12.8 l-5.6,-4.8 l1.2,4.8 l-1.2,4.8z M168.4,12.8 l-5.6,-4.8 l1.2,4.8 l-1.2,4.8z" fill="#161616" stroke="#161616" stroke-width=".8" stroke-linejoin="round"/><rect x="190.0" y="2" width="67.7" height="21.6" rx="1.6" fill="url(#btn)"/><rect x="212.2" y="2" width=".8" height="21.6" fill="#5a5a5a"/><rect x="234.7" y="2" width=".8" height="21.6" fill="#5a5a5a"/><circle cx="201.3" cy="12.8" r="7.2" fill="#777" stroke="#888" stroke-width="1"/><path d="M197.3,16.8 l8,-8 M200.3,8.4 a3,3 0 0 1 4,3" stroke="#8c8c8c" stroke-width="1.5" fill="none"/><circle cx="223.9" cy="12.8" r="7.6" fill="#ea4a50" stroke="#5e1014" stroke-width="1.2"/><path d="M222.5,8.200000000000001 q-4,4.6 0,9.2 M225.3,8.200000000000001 q4,4.6 0,9.2" stroke="#4a0c10" stroke-width="1.8" fill="none"/><circle cx="246.4" cy="12.8" r="7.6" fill="#ec5a5e" stroke="#5e1014" stroke-width="1.2"/><text x="246.4" y="17.200000000000003" font-size="12" font-weight="bold" text-anchor="middle" fill="#4a0c10" font-family="Liberation Sans,sans-serif">?</text><rect x="268.0" y="2" width="91.4" height="21.6" rx="1.6" fill="url(#btnb)"/><rect x="290.5" y="2" width=".8" height="21.6" fill="#7f9cc8"/><rect x="313.3" y="2" width=".8" height="21.6" fill="#7f9cc8"/><rect x="336.1" y="2" width=".8" height="21.6" fill="#7f9cc8"/><g fill="#f09a38" stroke="#b8661a" stroke-width=".7" stroke-linejoin="round"><path d="M279.4,4.800000000000001 l3,3.6 h-2 v3.4 h3.4 v-2 l3.6,3 l-3.6,3 v-2 h-3.4 v3.4 h2 l-3,3.6 l-3,-3.6 h2 v-3.4 h-3.4 v2 l-3.6,-3 l3.6,-3 v2 h3.4 v-3.4 h-2z"/></g><rect x="296.1" y="6.6000000000000005" width="12.4" height="12.4" rx="1" fill="#f09a38" stroke="#b8661a" stroke-width="1"/><path d="M296.1,13.4 h6 v5.6 M302.1,13.4 l5,-5.2" stroke="#b8661a" stroke-width="1" fill="none"/><circle cx="325.1" cy="12.8" r="6.4" fill="none" stroke="#b8661a" stroke-width="3"/><circle cx="325.1" cy="12.8" r="6.4" fill="none" stroke="#f09a38" stroke-width="1.8"/><path d="M328.1,4.4 l3.6,2.6 l-4.2,1.6z M322.1,21.200000000000003 l-3.6,-2.6 l4.2,-1.6z" fill="#b8661a"/><circle cx="347.9" cy="12.8" r="8.4" fill="#d8dde4" stroke="#6e6658" stroke-width="1.7"/><text x="347.9" y="17.1" font-size="12" font-weight="bold" text-anchor="middle" fill="#10243e" font-family="Liberation Sans,sans-serif">P</text><rect x="361.6" y="2" width="22.4" height="21.6" rx="1.6" fill="url(#btn)"/><circle cx="366.6" cy="6.6" r="2" fill="#f0a040" stroke="#3a2a1a" stroke-width=".6"/><circle cx="373.0" cy="6.6" r="2" fill="#f0a040" stroke="#3a2a1a" stroke-width=".6"/><circle cx="379.4" cy="6.6" r="2" fill="#151515" stroke="#3a2a1a" stroke-width=".6"/><circle cx="366.6" cy="12.8" r="2" fill="#f0a040" stroke="#3a2a1a" stroke-width=".6"/><circle cx="373.0" cy="12.8" r="2" fill="#f0a040" stroke="#3a2a1a" stroke-width=".6"/><circle cx="379.4" cy="12.8" r="2" fill="#151515" stroke="#3a2a1a" stroke-width=".6"/><circle cx="366.6" cy="19.0" r="2" fill="#151515" stroke="#3a2a1a" stroke-width=".6"/><circle cx="373.0" cy="19.0" r="2" fill="#151515" stroke="#3a2a1a" stroke-width=".6"/><circle cx="379.4" cy="19.0" r="2" fill="#151515" stroke="#3a2a1a" stroke-width=".6"/><rect x="392.0" y="2" width="22.0" height="21.6" rx="1.6" fill="url(#btnb)"/><rect x="397.4" y="4.4" width="11.6" height="16.8" fill="#2a2622"/><rect x="399.59999999999997" y="5.2" width="7.2" height="4.4" fill="#f0a24a"/><rect x="399.59999999999997" y="10.7" width="7.2" height="4.4" fill="#f0a24a"/><rect x="399.59999999999997" y="16.2" width="7.2" height="4.4" fill="#f0a24a"/><path d="M414,19.0 v4.6 h-4.6z" fill="#1a2a44"/></svg>
<!-- material manager -->
<div style="left:32.5px;top:695.5px;width:589.5px;height:130.3px;background:#464546;border:1px solid #59585a;border-right:1.4px solid #363636;border-bottom:1.2px solid #383838;"></div>
<div style="left:33.5px;top:712.3px;width:587.0px;height:1.0px;background:#3a3a3a;"></div>
<div style="left:38.5px;top:700.5px;width:9.2px;height:9.2px;background-image:radial-gradient(circle,#8c8c8c 0.6px,transparent 0.9px);background-size:2.3px 2.3px;"></div>
<span class="t " style="left:55.0px;top:698.3px;height:14px;line-height:14px;font-size:9.6px;color:#c9c9c9;letter-spacing:-0.385px;">Create</span>
<span class="t " style="left:93.5px;top:698.3px;height:14px;line-height:14px;font-size:9.6px;color:#c9c9c9;letter-spacing:-0.328px;">V-Ray</span>
<span class="t " style="left:129.5px;top:698.3px;height:14px;line-height:14px;font-size:9.6px;color:#c9c9c9;letter-spacing:-0.261px;">Edit</span>
<span class="t " style="left:157.5px;top:698.3px;height:14px;line-height:14px;font-size:9.6px;color:#c9c9c9;letter-spacing:0.148px;">Function</span>
<span class="t " style="left:207.0px;top:698.3px;height:14px;line-height:14px;font-size:9.6px;color:#c9c9c9;letter-spacing:-0.068px;">Texture</span>
<svg width="0" height="0" style="left:0;top:0"><defs>
<pattern id="chk" width="8" height="8" patternUnits="userSpaceOnUse"><rect width="8" height="8" fill="#7a7e84"/><rect width="4" height="4" fill="#64686e"/><rect x="4" y="4" width="4" height="4" fill="#64686e"/></pattern>
<linearGradient id="mfl" x1="0" y1="0" x2="0" y2="1"><stop offset="0" stop-color="#767b82"/><stop offset="1" stop-color="#8a9098"/></linearGradient>
<radialGradient id="m_white" cx=".34" cy=".3" r=".8"><stop offset="0" stop-color="#ffffff"/><stop offset=".4" stop-color="#e2e2e2"/><stop offset=".72" stop-color="#a4a6a8"/><stop offset="1" stop-color="#707478"/></radialGradient>
<radialGradient id="m_white2" cx=".34" cy=".3" r=".8"><stop offset="0" stop-color="#ffffff"/><stop offset=".4" stop-color="#e8e8e8"/><stop offset=".72" stop-color="#b0b2b4"/><stop offset="1" stop-color="#808488"/></radialGradient>
<radialGradient id="m_black" cx=".3" cy=".4" r=".72"><stop offset="0" stop-color="#ffffff"/><stop offset=".2" stop-color="#dadada"/><stop offset=".42" stop-color="#7a7a7a"/><stop offset=".68" stop-color="#262626"/><stop offset=".9" stop-color="#101214"/><stop offset="1" stop-color="#3a444c"/></radialGradient>
<radialGradient id="m_black2" cx=".3" cy=".38" r=".75"><stop offset="0" stop-color="#b4b4b4"/><stop offset=".25" stop-color="#787878"/><stop offset=".55" stop-color="#2e2e2e"/><stop offset=".85" stop-color="#101010"/><stop offset="1" stop-color="#0a0a0a"/></radialGradient>
<radialGradient id="m_black3" cx=".35" cy=".3" r=".8"><stop offset="0" stop-color="#6c6c6c"/><stop offset=".4" stop-color="#3c3c3c"/><stop offset=".8" stop-color="#1a1a1a"/><stop offset="1" stop-color="#0c0c0c"/></radialGradient>
<radialGradient id="m_screen" cx=".35" cy=".25" r=".8"><stop offset="0" stop-color="#8c8c8c"/><stop offset=".4" stop-color="#5a5a5a"/><stop offset="1" stop-color="#161616"/></radialGradient>
<radialGradient id="m_glass" cx=".4" cy=".35" r=".75"><stop offset="0" stop-color="#d2d4d6"/><stop offset=".5" stop-color="#b0b3b6"/><stop offset="1" stop-color="#8e9196"/></radialGradient>
<radialGradient id="m_blue" cx=".34" cy=".32" r=".78"><stop offset="0" stop-color="#b6d8e6"/><stop offset=".4" stop-color="#7cacc4"/><stop offset=".8" stop-color="#4c7c94"/><stop offset="1" stop-color="#3c6478"/></radialGradient>
<radialGradient id="m_dblue" cx=".34" cy=".32" r=".78"><stop offset="0" stop-color="#8ea2ba"/><stop offset=".4" stop-color="#58728e"/><stop offset=".8" stop-color="#2e445a"/><stop offset="1" stop-color="#3a4c60"/></radialGradient>
<radialGradient id="m_strap" cx=".4" cy=".3" r=".8"><stop offset="0" stop-color="#f0f0f0"/><stop offset=".5" stop-color="#c0c2c4"/><stop offset="1" stop-color="#6a6c70"/></radialGradient>
<clipPath id="sph"><circle cx="24" cy="25.6" r="22"/></clipPath>
</defs></svg><svg style="left:35.0px;top:715.5px;" width="48" height="50.4" viewBox="0 0 48 50.4" ><rect width="48" height="50.4" fill="url(#chk)"/><rect y="30" width="48" height="20.4" fill="url(#mfl)"/><path d="M0,34 h48 M0,38.5 h48 M0,44 h48" stroke="#6c7178" stroke-width=".8"/><circle cx="24" cy="25.6" r="22" fill="url(#m_white)"/><circle cx="14" cy="28" r=".7" fill="#888"/><circle cx="30" cy="24" r=".8" fill="#777"/><circle cx="21" cy="33" r=".6" fill="#888"/><circle cx="35" cy="30" r=".6" fill="#8a8a8a"/><rect x="36.6" y="2.4" width="9.4" height="3.4" fill="#f4f4f4"/></svg><div style="left:35.0px;top:765.8px;width:48.0px;height:9.6px;background:#5e5e5e;overflow:hidden;"><span class="t" style="left:1.2px;top:-2.4px;height:14px;line-height:14px;font-size:9.3px;letter-spacing:-0.655px;color:#d2d2d2">BUTTONS_Mat</span></div><svg style="left:88.0px;top:715.5px;" width="48" height="50.4" viewBox="0 0 48 50.4" ><rect width="48" height="50.4" fill="url(#chk)"/><rect y="30" width="48" height="20.4" fill="url(#mfl)"/><path d="M0,34 h48 M0,38.5 h48 M0,44 h48" stroke="#6c7178" stroke-width=".8"/><circle cx="24" cy="25.6" r="22" fill="url(#m_screen)"/><g clip-path="url(#sph)"><path d="M0,27 Q24,33 48,27 V31 Q24,37 0,31Z" fill="#c9c9c9"/><path d="M4,29.4 Q24,34.4 44,29.4" stroke="#333" stroke-width="1.6" stroke-dasharray="2.4 1.6" fill="none"/><path d="M0,31 Q24,37 48,31 V50 H0Z" fill="#0c0c0c" opacity=".75"/></g><rect x="36.6" y="2.4" width="9.4" height="3.4" fill="#f4f4f4"/></svg><div style="left:88.0px;top:765.8px;width:48.0px;height:9.6px;background:#5e5e5e;overflow:hidden;"><span class="t" style="left:1.2px;top:-2.4px;height:14px;line-height:14px;font-size:9.3px;letter-spacing:-0.284px;color:#d2d2d2">Screen_Mat</span></div><svg style="left:141.0px;top:715.5px;" width="48" height="50.4" viewBox="0 0 48 50.4" ><rect width="48" height="50.4" fill="url(#chk)"/><rect y="30" width="48" height="20.4" fill="url(#mfl)"/><path d="M0,34 h48 M0,38.5 h48 M0,44 h48" stroke="#6c7178" stroke-width=".8"/><circle cx="24" cy="25.6" r="22" fill="url(#m_glass)" opacity=".9"/><rect x="36.6" y="2.4" width="9.4" height="3.4" fill="#f4f4f4"/></svg><div style="left:141.0px;top:765.8px;width:48.0px;height:9.6px;background:#5e5e5e;overflow:hidden;"><span class="t" style="left:1.2px;top:-2.4px;height:14px;line-height:14px;font-size:9.3px;letter-spacing:-0.231px;color:#d2d2d2">Screen_Glass</span></div><svg style="left:194.0px;top:715.5px;" width="48" height="50.4" viewBox="0 0 48 50.4" ><rect width="48" height="50.4" fill="url(#chk)"/><rect y="30" width="48" height="20.4" fill="url(#mfl)"/><path d="M0,34 h48 M0,38.5 h48 M0,44 h48" stroke="#6c7178" stroke-width=".8"/><circle cx="24" cy="25.6" r="22" fill="url(#m_black)"/><rect x="36.6" y="2.4" width="9.4" height="3.4" fill="#f4f4f4"/></svg><div style="left:194.0px;top:765.8px;width:48.0px;height:9.6px;background:#5e5e5e;overflow:hidden;"><span class="t" style="left:1.2px;top:-2.4px;height:14px;line-height:14px;font-size:9.3px;letter-spacing:-0.299px;color:#d2d2d2">Black_Mat_</span></div><svg style="left:247.0px;top:715.5px;" width="48" height="50.4" viewBox="0 0 48 50.4" ><rect width="48" height="50.4" fill="url(#chk)"/><rect y="30" width="48" height="20.4" fill="url(#mfl)"/><path d="M0,34 h48 M0,38.5 h48 M0,44 h48" stroke="#6c7178" stroke-width=".8"/><circle cx="24" cy="25.6" r="22" fill="url(#m_white2)"/><rect x="36.6" y="2.4" width="9.4" height="3.4" fill="#f4f4f4"/></svg><div style="left:247.0px;top:765.8px;width:48.0px;height:9.6px;background:#5e5e5e;overflow:hidden;"><span class="t" style="left:1.2px;top:-2.4px;height:14px;line-height:14px;font-size:9.3px;letter-spacing:0.079px;color:#d2d2d2">Body_Front</span></div><svg style="left:300.0px;top:715.5px;" width="48" height="50.4" viewBox="0 0 48 50.4" ><rect width="48" height="50.4" fill="url(#chk)"/><rect y="30" width="48" height="20.4" fill="url(#mfl)"/><path d="M0,34 h48 M0,38.5 h48 M0,44 h48" stroke="#6c7178" stroke-width=".8"/><circle cx="24" cy="25.6" r="22" fill="url(#m_blue)"/><rect x="36.6" y="2.4" width="9.4" height="3.4" fill="#f4f4f4"/></svg><div style="left:300.0px;top:765.8px;width:48.0px;height:9.6px;background:#5e5e5e;overflow:hidden;"><span class="t" style="left:1.2px;top:-2.4px;height:14px;line-height:14px;font-size:9.3px;letter-spacing:-0.556px;color:#d2d2d2">BODY_BACK</span></div><svg style="left:353.0px;top:715.5px;" width="48" height="50.4" viewBox="0 0 48 50.4" ><rect width="48" height="50.4" fill="url(#chk)"/><rect y="30" width="48" height="20.4" fill="url(#mfl)"/><path d="M0,34 h48 M0,38.5 h48 M0,44 h48" stroke="#6c7178" stroke-width=".8"/><circle cx="24" cy="25.6" r="22" fill="url(#m_dblue)"/><rect x="36.6" y="2.4" width="9.4" height="3.4" fill="#f4f4f4"/></svg><div style="left:353.0px;top:765.8px;width:48.0px;height:9.6px;background:#5e5e5e;overflow:hidden;"><span class="t" style="left:1.2px;top:-2.4px;height:14px;line-height:14px;font-size:9.3px;letter-spacing:-0.086px;color:#d2d2d2">Blue_Mat</span></div><svg style="left:406.0px;top:715.5px;" width="48" height="50.4" viewBox="0 0 48 50.4" ><rect width="48" height="50.4" fill="url(#chk)"/><rect y="30" width="48" height="20.4" fill="url(#mfl)"/><path d="M0,34 h48 M0,38.5 h48 M0,44 h48" stroke="#6c7178" stroke-width=".8"/><circle cx="24" cy="25.6" r="22" fill="url(#m_black)"/><rect x="36.6" y="2.4" width="9.4" height="3.4" fill="#f4f4f4"/></svg><div style="left:406.0px;top:765.8px;width:48.0px;height:9.6px;background:#5e5e5e;overflow:hidden;"><span class="t" style="left:1.2px;top:-2.4px;height:14px;line-height:14px;font-size:9.3px;letter-spacing:0.043px;color:#d2d2d2">Port_Metal</span></div><svg style="left:459.0px;top:715.5px;" width="48" height="50.4" viewBox="0 0 48 50.4" ><rect width="48" height="50.4" fill="url(#chk)"/><rect y="30" width="48" height="20.4" fill="url(#mfl)"/><path d="M0,34 h48 M0,38.5 h48 M0,44 h48" stroke="#6c7178" stroke-width=".8"/><circle cx="24" cy="25.6" r="22" fill="url(#m_black2)"/><rect x="36.6" y="2.4" width="9.4" height="3.4" fill="#f4f4f4"/></svg><div style="left:459.0px;top:765.8px;width:48.0px;height:9.6px;background:#5e5e5e;overflow:hidden;"><span class="t" style="left:1.2px;top:-2.4px;height:14px;line-height:14px;font-size:9.3px;letter-spacing:-0.020px;color:#d2d2d2">Black_Matt</span></div><svg style="left:512.0px;top:715.5px;" width="48" height="50.4" viewBox="0 0 48 50.4" ><rect width="48" height="50.4" fill="url(#chk)"/><rect y="30" width="48" height="20.4" fill="url(#mfl)"/><path d="M0,34 h48 M0,38.5 h48 M0,44 h48" stroke="#6c7178" stroke-width=".8"/><circle cx="24" cy="25.6" r="22" fill="url(#m_strap)"/><g clip-path="url(#sph)"><path d="M0,30 Q24,35 48,29 V50 H0Z" fill="#4f9aa6"/><path d="M0,37 Q24,42 48,36 V50 H0Z" fill="#3c7e8a"/><path d="M8,10 Q22,4 40,12 L38,15 Q22,8 10,13Z" fill="#3a3a3a"/><path d="M2,22 Q24,27 46,20" stroke="#8a8a8a" stroke-width="1" fill="none"/></g><rect x="36.6" y="2.4" width="9.4" height="3.4" fill="#f0a040"/></svg><div style="left:512.0px;top:765.8px;width:48.0px;height:9.6px;background:#f5a93a;overflow:hidden;"><span class="t" style="left:1.2px;top:-2.4px;height:14px;line-height:14px;font-size:9.3px;letter-spacing:-0.676px;color:#1c1c1c">STRAP_Mat</span></div><svg style="left:565.0px;top:715.5px;" width="48" height="50.4" viewBox="0 0 48 50.4" ><rect width="48" height="50.4" fill="url(#chk)"/><rect y="30" width="48" height="20.4" fill="url(#mfl)"/><path d="M0,34 h48 M0,38.5 h48 M0,44 h48" stroke="#6c7178" stroke-width=".8"/><circle cx="24" cy="25.6" r="22" fill="url(#m_black3)"/><rect x="36.6" y="2.4" width="9.4" height="3.4" fill="#f4f4f4"/></svg><div style="left:565.0px;top:765.8px;width:48.0px;height:9.6px;background:#5e5e5e;overflow:hidden;"><span class="t" style="left:1.2px;top:-2.4px;height:14px;line-height:14px;font-size:9.3px;letter-spacing:-0.032px;color:#d2d2d2">Stitche_Mat</span></div>
<!-- coordinate manager -->
<div style="left:622.6px;top:695.5px;width:246.6px;height:130.3px;background:#464546;border:1px solid #59585a;border-left:1.4px solid #5a595b;border-right:1px solid #3a3a3a;border-bottom:1.2px solid #383838;"></div>
<div style="left:624.7px;top:712.3px;width:243.5px;height:1.0px;background:#3a3a3a;"></div>
<div style="left:629px;top:699.5px;width:9.2px;height:9.2px;background-image:radial-gradient(circle,#8c8c8c 0.6px,transparent 0.9px);background-size:2.3px 2.3px;"></div>
<span class="t " style="left:647.0px;top:696.6px;height:14px;line-height:14px;font-size:9px;color:#777;">--</span>
<span class="t " style="left:723.0px;top:696.6px;height:14px;line-height:14px;font-size:9px;color:#777;">--</span>
<span class="t " style="left:799.0px;top:696.6px;height:14px;line-height:14px;font-size:9px;color:#777;">--</span>
<span class="t " style="left:627.3px;top:718.0px;height:14px;line-height:14px;font-size:8.8px;color:#a6a6a6;font-weight:bold;">X</span>
<span class="t " style="left:708.0px;top:718.0px;height:14px;line-height:14px;font-size:8.8px;color:#a6a6a6;font-weight:bold;">X</span>
<span class="t " style="left:789.0px;top:718.0px;height:14px;line-height:14px;font-size:8.8px;color:#a6a6a6;font-weight:bold;">H</span>
<div style="left:635.0px;top:718.5px;width:68.7px;height:13.0px;background:#424242;border-radius:2px;border:1px solid #3c3c3c;"></div>
<span class="t " style="left:639.5px;top:718.2px;height:14px;line-height:14px;font-size:9.2px;color:#6e6e6e;">0 cm</span>
<svg style="left:696.7px;top:721.0px;" width="5" height="8" viewBox="0 0 5 8" ><path d="M2.2,0 L4.4,3 H0Z M0,4.6 H4.4 L2.2,7.6Z" fill="#6a6a6a"/></svg>
<div style="left:716.0px;top:718.5px;width:67.7px;height:13.0px;background:#424242;border-radius:2px;border:1px solid #3c3c3c;"></div>
<span class="t " style="left:720.5px;top:718.2px;height:14px;line-height:14px;font-size:9.2px;color:#6e6e6e;">0 cm</span>
<svg style="left:776.7px;top:721.0px;" width="5" height="8" viewBox="0 0 5 8" ><path d="M2.2,0 L4.4,3 H0Z M0,4.6 H4.4 L2.2,7.6Z" fill="#6a6a6a"/></svg>
<div style="left:797.5px;top:718.5px;width:67.5px;height:13.0px;background:#424242;border-radius:2px;border:1px solid #3c3c3c;"></div>
<span class="t " style="left:802.0px;top:718.2px;height:14px;line-height:14px;font-size:9.2px;color:#6e6e6e;">0 °</span>
<svg style="left:858.0px;top:721.0px;" width="5" height="8" viewBox="0 0 5 8" ><path d="M2.2,0 L4.4,3 H0Z M0,4.6 H4.4 L2.2,7.6Z" fill="#6a6a6a"/></svg>
<span class="t " style="left:627.3px;top:734.5px;height:14px;line-height:14px;font-size:8.8px;color:#a6a6a6;font-weight:bold;">Y</span>
<span class="t " style="left:708.0px;top:734.5px;height:14px;line-height:14px;font-size:8.8px;color:#a6a6a6;font-weight:bold;">Y</span>
<span class="t " style="left:789.0px;top:734.5px;height:14px;line-height:14px;font-size:8.8px;color:#a6a6a6;font-weight:bold;">P</span>
<div style="left:635.0px;top:735.0px;width:68.7px;height:13.0px;background:#424242;border-radius:2px;border:1px solid #3c3c3c;"></div>
<span class="t " style="left:639.5px;top:734.7px;height:14px;line-height:14px;font-size:9.2px;color:#6e6e6e;">0 cm</span>
<svg style="left:696.7px;top:737.5px;" width="5" height="8" viewBox="0 0 5 8" ><path d="M2.2,0 L4.4,3 H0Z M0,4.6 H4.4 L2.2,7.6Z" fill="#6a6a6a"/></svg>
<div style="left:716.0px;top:735.0px;width:67.7px;height:13.0px;background:#424242;border-radius:2px;border:1px solid #3c3c3c;"></div>
<span class="t " style="left:720.5px;top:734.7px;height:14px;line-height:14px;font-size:9.2px;color:#6e6e6e;">0 cm</span>
<svg style="left:776.7px;top:737.5px;" width="5" height="8" viewBox="0 0 5 8" ><path d="M2.2,0 L4.4,3 H0Z M0,4.6 H4.4 L2.2,7.6Z" fill="#6a6a6a"/></svg>
<div style="left:797.5px;top:735.0px;width:67.5px;height:13.0px;background:#424242;border-radius:2px;border:1px solid #3c3c3c;"></div>
<span class="t " style="left:802.0px;top:734.7px;height:14px;line-height:14px;font-size:9.2px;color:#6e6e6e;">0 °</span>
<svg style="left:858.0px;top:737.5px;" width="5" height="8" viewBox="0 0 5 8" ><path d="M2.2,0 L4.4,3 H0Z M0,4.6 H4.4 L2.2,7.6Z" fill="#6a6a6a"/></svg>
<span class="t " style="left:627.3px;top:751.0px;height:14px;line-height:14px;font-size:8.8px;color:#a6a6a6;font-weight:bold;">Z</span>
<span class="t " style="left:708.0px;top:751.0px;height:14px;line-height:14px;font-size:8.8px;color:#a6a6a6;font-weight:bold;">Z</span>
<span class="t " style="left:789.0px;top:751.0px;height:14px;line-height:14px;font-size:8.8px;color:#a6a6a6;font-weight:bold;">B</span>
<div style="left:635.0px;top:751.5px;width:68.7px;height:13.0px;background:#424242;border-radius:2px;border:1px solid #3c3c3c;"></div>
<span class="t " style="left:639.5px;top:751.2px;height:14px;line-height:14px;font-size:9.2px;color:#6e6e6e;">0 cm</span>
<svg style="left:696.7px;top:754.0px;" width="5" height="8" viewBox="0 0 5 8" ><path d="M2.2,0 L4.4,3 H0Z M0,4.6 H4.4 L2.2,7.6Z" fill="#6a6a6a"/></svg>
<div style="left:716.0px;top:751.5px;width:67.7px;height:13.0px;background:#424242;border-radius:2px;border:1px solid #3c3c3c;"></div>
<span class="t " style="left:720.5px;top:751.2px;height:14px;line-height:14px;font-size:9.2px;color:#6e6e6e;">0 cm</span>
<svg style="left:776.7px;top:754.0px;" width="5" height="8" viewBox="0 0 5 8" ><path d="M2.2,0 L4.4,3 H0Z M0,4.6 H4.4 L2.2,7.6Z" fill="#6a6a6a"/></svg>
<div style="left:797.5px;top:751.5px;width:67.5px;height:13.0px;background:#424242;border-radius:2px;border:1px solid #3c3c3c;"></div>
<span class="t " style="left:802.0px;top:751.2px;height:14px;line-height:14px;font-size:9.2px;color:#6e6e6e;">0 °</span>
<svg style="left:858.0px;top:754.0px;" width="5" height="8" viewBox="0 0 5 8" ><path d="M2.2,0 L4.4,3 H0Z M0,4.6 H4.4 L2.2,7.6Z" fill="#6a6a6a"/></svg>
<div style="left:635.0px;top:770.5px;width:68.7px;height:12.0px;background:#5c5c5c;border-radius:2px;"></div>
<span class="t " style="left:641.0px;top:770.0px;height:14px;line-height:14px;font-size:9.2px;color:#7e7e7e;">World</span>
<div style="left:692.7px;top:774.8px;width:5.4px;height:3.6px;background:#7c7c7c;clip-path:polygon(0 0,100% 0,50% 100%);"></div>
<div style="left:715.7px;top:770.5px;width:68.0px;height:12.0px;background:#5c5c5c;border-radius:2px;"></div>
<span class="t " style="left:721.7px;top:770.0px;height:14px;line-height:14px;font-size:9.2px;color:#7e7e7e;">Scale</span>
<div style="left:772.7px;top:774.8px;width:5.4px;height:3.6px;background:#7c7c7c;clip-path:polygon(0 0,100% 0,50% 100%);"></div>
<div style="left:797.5px;top:770.0px;width:68.0px;height:13.0px;background:linear-gradient(#7a7a7a,#6a6a6a);border-radius:6.5px;"></div>
<span class="t " style="left:819.5px;top:769.6px;height:14px;line-height:14px;font-size:9.6px;color:#e2e2e2;letter-spacing:0.097px;">Apply</span>
<!-- status bar -->
<div style="left:0.0px;top:825.8px;width:873.0px;height:2.0px;background:#424142;"></div>
<div style="left:0.0px;top:827.6px;width:873.0px;height:17.5px;background:#464546;border-top:1.2px solid #555456;"></div>
<div style="left:4.5px;top:833.5px;width:9.2px;height:9.2px;background-image:radial-gradient(circle,#8c8c8c 0.6px,transparent 0.9px);background-size:2.3px 2.3px;"></div>
<span class="t " style="left:22.0px;top:830.8px;height:14px;line-height:14px;font-size:9.6px;color:#c6c6c6;letter-spacing:-0.221px;">press CTRL+LMB to fold</span>
<!-- logo -->
<span class="t" style="left:0.9px;top:822px;height:14px;line-height:14px;font-size:14px;font-weight:bold;font-style:italic;color:#a9adad;letter-spacing:-0.9px;transform-origin:0 0;transform:rotate(-90deg);">MAXON</span>
<span class="t" style="left:16.3px;top:822.3px;height:13px;line-height:13px;font-size:12.7px;color:#8e9090;letter-spacing:-0.2px;transform-origin:0 0;transform:rotate(-90deg);">CINEMA 4D</span>
<!-- right column: object manager + attribute manager -->
<div style="left:869.5px;top:232.0px;width:3.5px;height:614.0px;background:#494949;"></div>
<div style="left:873.0px;top:232.0px;width:207.0px;height:284.0px;background:#464446;border-left:1px solid #686868;border-bottom:1px solid #5a5a5a;"></div>
<div style="left:1002.3px;top:232.0px;width:1.0px;height:283.5px;background:#3a3a3a;"></div>
<div style="left:1034.6px;top:232.0px;width:1.0px;height:283.5px;background:#3a3a3a;"></div>
<div style="left:874.0px;top:232.0px;width:206.0px;height:12.5px;background:#4b4b4c;"></div>
<div style="left:876.5px;top:234.0px;width:8.0px;height:8.0px;border:1px solid #a8a8a8;"></div>
<div style="left:878.3px;top:237.6px;width:4.4px;height:1.0px;background:#c0c0c0;"></div>
<div style="left:880.0px;top:235.8px;width:1.0px;height:4.4px;background:#c0c0c0;"></div>
<div style="left:885.0px;top:238.0px;width:3.0px;height:1.0px;background:#888;"></div>
<svg style="left:889px;top:232.5px" width="12" height="11" viewBox="0 0 12 11"><path d="M1.6,0.5 V9.4 H10.6" fill="none" stroke="#d8d8d8" stroke-width="1.4"/><text x="4.6" y="6.6" font-size="7.4" font-weight="bold" fill="#e8e8e8" font-family="Liberation Sans,sans-serif">0</text></svg>
<span class="t " style="left:903.8px;top:231.3px;height:14px;line-height:14px;font-size:9.6px;color:#c8c8c8;letter-spacing:-0.036px;">Wrist_Patient_Monitor</span>
<div style="left:1004.8px;top:234.2px;width:10.0px;height:8.0px;background:#777;clip-path:polygon(100% 0,100% 100%,0 100%);"></div>
<div style="left:1004.8px;top:234.2px;width:10.0px;height:8.0px;background:#5c5c5c;clip-path:polygon(0 0,100% 0,0 100%);"></div>
<div style="left:1020.2px;top:233.4px;width:2.6px;height:2.6px;background:#8c8c8c;border-radius:50%;"></div>
<div style="left:1020.2px;top:238.6px;width:2.6px;height:2.6px;background:#8c8c8c;border-radius:50%;"></div>
<div style="left:873.0px;top:519.5px;width:207.0px;height:326.5px;background:#464446;border-left:1px solid #686868;border-top:1px solid #5c5c5c;"></div>
<div style="left:874.0px;top:536.3px;width:206.0px;height:1.0px;background:#3c3c3c;"></div>
<div style="left:874.0px;top:537.3px;width:206.0px;height:1.2px;background:#515151;"></div>
<div style="left:878.5px;top:524.5px;width:9.2px;height:9.2px;background-image:radial-gradient(circle,#8c8c8c 0.6px,transparent 0.9px);background-size:2.3px 2.3px;"></div>
<span class="t " style="left:894.6px;top:522.0px;height:14px;line-height:14px;font-size:9.6px;color:#c9c9c9;letter-spacing:0.122px;">Mode</span>
<span class="t " style="left:931.3px;top:522.0px;height:14px;line-height:14px;font-size:9.6px;color:#c9c9c9;letter-spacing:-0.136px;">Edit</span>
<span class="t " style="left:959.4px;top:522.0px;height:14px;line-height:14px;font-size:9.6px;color:#c9c9c9;letter-spacing:-0.246px;">User Data</span>
<div style="left:0.0px;top:844.9px;width:1080.0px;height:1.3px;background:#1a1a1a;"></div>
</div>
</div>
</body></html>
